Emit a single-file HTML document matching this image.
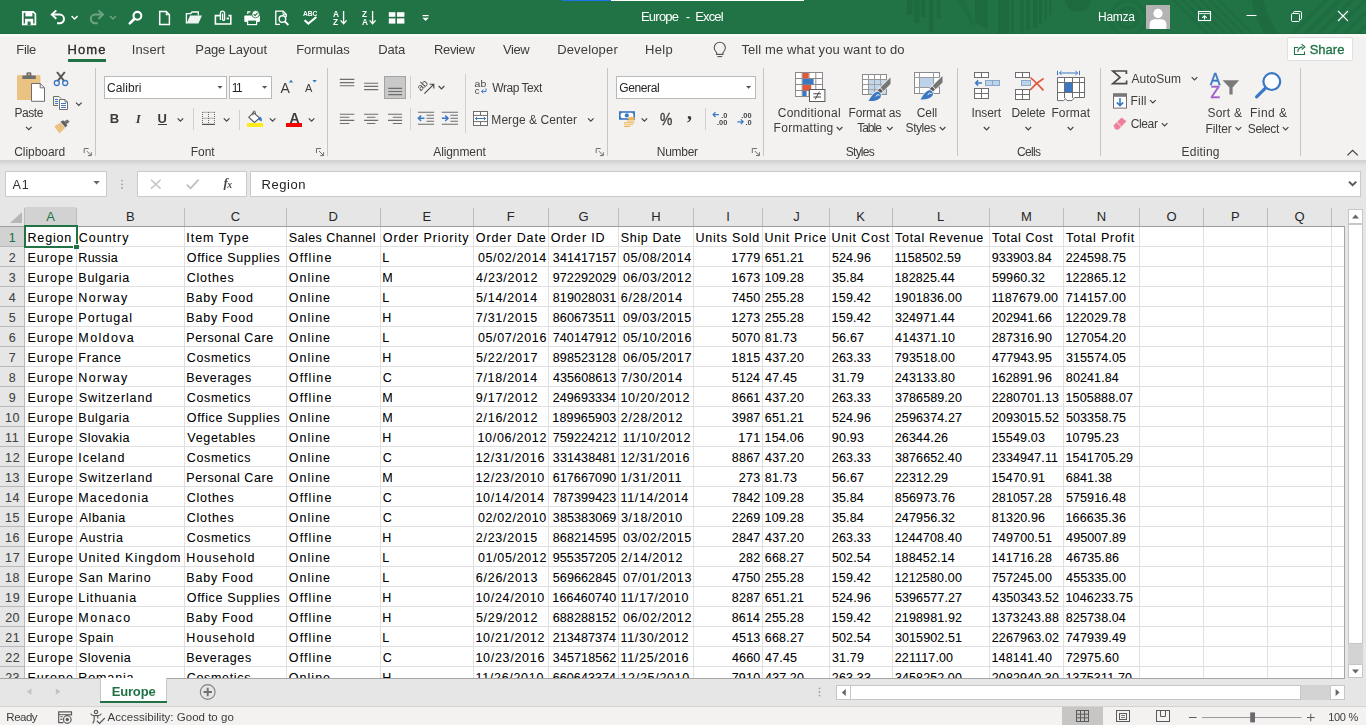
<!DOCTYPE html>
<html><head><meta charset="utf-8"><title>Europe - Excel</title>
<style>
html,body{margin:0;padding:0;}
body{width:1366px;height:725px;overflow:hidden;position:relative;background:#e6e6e6;font-family:"Liberation Sans",sans-serif;}
.r{position:absolute;}

.cells .t{text-shadow:0 0 .5px rgba(0,0,0,.2);}
.ga{position:absolute;left:0;top:0;width:1366px;height:725px;will-change:transform;}
.t{position:absolute;white-space:pre;color:#444;}
svg{position:absolute;overflow:visible;}
</style></head><body>
<div class="r" style="left:0px;top:0px;width:1366px;height:34px;background:#217346;"></div>
<div class="r" style="left:0px;top:34px;width:1366px;height:126px;background:#f3f2f1;"></div>
<div class="r" style="left:0px;top:34px;width:1366px;height:3px;background:#f8f8f6;"></div>
<div class="r" style="left:0px;top:33px;width:1366px;height:1px;background:#1f6e42;"></div>
<div class="r" style="left:0px;top:160px;width:1366px;height:47px;background:#e6e6e6;"></div>
<div class="r" style="left:0px;top:160px;width:1366px;height:6px;background:linear-gradient(#cfcfcf,#e6e6e6);"></div>
<div class="r" style="left:562px;top:0px;width:49px;height:1px;background:#1a73e8;"></div>
<div class="r" style="left:611px;top:0px;width:193px;height:1px;background:#ffffff;"></div>
<div class="ga">
<svg class="r" style="left:0px;top:0px;overflow:hidden" width="1366" height="34" viewBox="0 0 1366 34"><rect x="907" y="0" width="5.5" height="15" fill="#1e6a3f"/><rect x="914" y="0" width="5.5" height="23" fill="#1e6a3f"/><rect x="921" y="0" width="4.7" height="17.5" fill="#1e6a3f"/><rect x="929" y="0" width="4.6" height="31.6" fill="#1e6a3f"/><rect x="936.6" y="0" width="4.0" height="19" fill="#1e6a3f"/><path d="M975 0H987.6V30L975 22Z" fill="#1e6a3f"/><rect x="998" y="0" width="11" height="34" fill="#1e6a3f"/><rect x="1011" y="0" width="2.5" height="34" fill="#1e6a3f"/><rect x="1020.5" y="0" width="3.0" height="33" fill="#1e6a3f"/><rect x="1026" y="0" width="3.5" height="31" fill="#1e6a3f"/><rect x="1033" y="0" width="4.5" height="28" fill="#1e6a3f"/><rect x="1039" y="0" width="3.0" height="24" fill="#1e6a3f"/><rect x="1044.5" y="0" width="2.5" height="20" fill="#1e6a3f"/><rect x="1049" y="0" width="2.5" height="15" fill="#1e6a3f"/><path d="M957 0L965 0L975 26L972 26Z" fill="#1e6a3f" opacity=".6"/><circle cx="1078" cy="-2" r="13.5" fill="#1e6a3f"/><circle cx="1128" cy="18" r="10" fill="none" stroke="#1e6a3f" stroke-width="3.5" opacity=".7"/><circle cx="1128" cy="18" r="17.5" fill="none" stroke="#1e6a3f" stroke-width="3" opacity=".55"/><path d="M1172 0L1175.5 0L1209.5 34L1206 34Z" fill="#1e6a3f" opacity=".75"/><path d="M1181 0L1184.5 0L1218.5 34L1215 34Z" fill="#1e6a3f" opacity=".75"/><path d="M1190 0L1193.5 0L1227.5 34L1224 34Z" fill="#1e6a3f" opacity=".75"/><path d="M1199 0L1202.5 0L1236.5 34L1233 34Z" fill="#1e6a3f" opacity=".75"/><path d="M1208 0L1211.5 0L1245.5 34L1242 34Z" fill="#1e6a3f" opacity=".75"/><path d="M1217 0L1220.5 0L1254.5 34L1251 34Z" fill="#1e6a3f" opacity=".75"/><circle cx="1352" cy="-18" r="96" fill="none" stroke="#1e6a3f" stroke-width="12" opacity=".85"/><path d="M1290 34L1295 34L1329 0L1324 0Z" fill="#1e6a3f" opacity=".7"/><path d="M1303 34L1308 34L1342 0L1337 0Z" fill="#1e6a3f" opacity=".7"/><path d="M1316 34L1321 34L1355 0L1350 0Z" fill="#1e6a3f" opacity=".7"/><path d="M1329 34L1334 34L1368 0L1363 0Z" fill="#1e6a3f" opacity=".7"/><path d="M1342 34L1347 34L1381 0L1376 0Z" fill="#1e6a3f" opacity=".7"/><path d="M1355 34L1360 34L1394 0L1389 0Z" fill="#1e6a3f" opacity=".7"/><path d="M22.8 11.8H33.2L35.4 14V24.4H22.8Z" fill="none" stroke="#fff" stroke-width="1.7"/><rect x="25.4" y="11.8" width="7" height="4.6" fill="#fff"/><rect x="25" y="18.8" width="8.2" height="5.6" fill="#fff"/><rect x="27.6" y="21.6" width="3" height="3.4" fill="#217346"/><g opacity="1" transform="translate(50.5,0)"><path d="M1.2 14.6H9.2A4.3 4.3 0 0 1 9.2 23.2H6.5" fill="none" stroke="#fff" stroke-width="2"/><path d="M5.8 10.4L1.4 14.6L5.8 18.8" fill="none" stroke="#fff" stroke-width="2"/></g><path d="M71.60 16.00L74.60 19.00L77.60 16.00" fill="none" stroke="#fff" stroke-width="1.4"/><g opacity="0.35" transform="translate(104.3,0) scale(-1,1)"><path d="M1.2 14.6H9.2A4.3 4.3 0 0 1 9.2 23.2H6.5" fill="none" stroke="#fff" stroke-width="2"/><path d="M5.8 10.4L1.4 14.6L5.8 18.8" fill="none" stroke="#fff" stroke-width="2"/></g><g opacity=".35"><path d="M110.00 16.00L113.00 19.00L116.00 16.00" fill="none" stroke="#fff" stroke-width="1.4"/></g><circle cx="137.4" cy="15.8" r="3.9" fill="none" stroke="#fff" stroke-width="2.1"/><path d="M134.2 19L129.8 23.4" stroke="#fff" stroke-width="2.7" stroke-linecap="round"/><path d="M159.7 11.6H166.3L169.4 14.7V24.4H159.7Z" fill="none" stroke="#fff" stroke-width="1.5"/><path d="M166.3 11.6V14.7H169.4" fill="none" stroke="#fff" stroke-width="1.1"/><path d="M186.4 23.4V13.6H190.6L192 12H198.3V15.2" fill="none" stroke="#fff" stroke-width="1.3"/><path d="M186.6 23.6L190 15.6H202L198.4 23.6Z" fill="#fff" opacity=".92"/><path d="M220.6 15.6H215.4V24H230.8V15.6H228.4" fill="none" stroke="#fff" stroke-width="1.6"/><path d="M220.4 20V13.2A2.1 2.1 0 0 1 224.6 13.2V19.4A1 1 0 0 1 222.6 19.4V13.6" fill="none" stroke="#fff" stroke-width="1.3"/><rect x="226.6" y="17.6" width="2.4" height="1.8" fill="#fff"/><path d="M247.8 14V11.8H250.5" fill="none" stroke="#fff" stroke-width="1.2"/><rect x="244.3" y="15.4" width="15.6" height="6.6" rx="1" fill="#fff"/><rect x="247.6" y="20" width="9" height="4.6" fill="#217346" stroke="#fff" stroke-width="1.2"/><circle cx="255.6" cy="14.2" r="3.7" fill="#fff" stroke="#217346" stroke-width=".8"/><path d="M253.7 14.2L255.1 15.7L257.6 12.8" fill="none" stroke="#217346" stroke-width="1.1"/><path d="M286.2 17V14.2L283.2 11.2H275.8V24.4H280" fill="none" stroke="#fff" stroke-width="1.3"/><path d="M283 11.4V14.4H286" fill="none" stroke="#fff" stroke-width="1"/><circle cx="282.4" cy="19" r="3.3" fill="none" stroke="#fff" stroke-width="1.4"/><path d="M284.8 21.4L288.4 25" stroke="#fff" stroke-width="1.8"/><text x="303" y="15.6" font-family="Liberation Sans" font-weight="bold" font-size="6.6" fill="#fff" textLength="14.4" lengthAdjust="spacingAndGlyphs">ABC</text><path d="M304.6 20.2L308.3 23.6L316.4 17" fill="none" stroke="#fff" stroke-width="2"/><text x="333" y="16.8" font-family="Liberation Sans" font-weight="bold" font-size="8.2" fill="#fff">A</text><text x="333" y="24.6" font-family="Liberation Sans" font-weight="bold" font-size="8.2" fill="#fff">Z</text><path d="M343.6 11V23.6M340.6 20.4L343.6 23.8L346.6 20.4" fill="none" stroke="#fff" stroke-width="1.3"/><text x="362" y="16.8" font-family="Liberation Sans" font-weight="bold" font-size="8.2" fill="#fff">Z</text><text x="362" y="24.6" font-family="Liberation Sans" font-weight="bold" font-size="8.2" fill="#fff">A</text><path d="M372.6 11V23.6M369.6 20.4L372.6 23.8L375.6 20.4" fill="none" stroke="#fff" stroke-width="1.3"/><rect x="388.8" y="12.2" width="6.6" height="4.6" fill="#fff"/><rect x="397" y="12.2" width="7.4" height="4.6" fill="#fff"/><rect x="388.8" y="18.4" width="6.6" height="5.2" fill="#fff"/><rect x="397" y="18.4" width="7.4" height="5.2" fill="#fff"/><rect x="422.6" y="15" width="6" height="1.2" fill="#fff"/><path d="M422.4 17.8H428.8L425.6 21Z" fill="#fff"/><rect x="1146" y="5" width="24" height="24" fill="#b3b3b3"/><circle cx="1158" cy="13.4" r="4.6" fill="#fff"/><path d="M1149.6 29V24.6Q1149.6 19.6 1154.6 19.2H1161.4Q1166.4 19.6 1166.4 24.6V29Z" fill="#fff"/><rect x="1198.5" y="11.5" width="12" height="9" fill="none" stroke="#fff" stroke-width="1.1"/><path d="M1198.5 13.6H1210.5" stroke="#fff" stroke-width=".9"/><path d="M1204.5 19.6V16M1202.3 17.9L1204.5 15.7L1206.7 17.9" fill="none" stroke="#fff" stroke-width="1.1"/><path d="M1246.5 15.5H1256.5" stroke="#fff" stroke-width="1"/><rect x="1291.5" y="13.5" width="8" height="8" rx="1" fill="none" stroke="#fff" stroke-width="1"/><path d="M1293.5 13.5V12.6Q1293.5 11.5 1294.6 11.5H1300.4Q1301.5 11.5 1301.5 12.6V18.4Q1301.5 19.5 1300.4 19.5H1299.5" fill="none" stroke="#fff" stroke-width="1"/><path d="M1338 11L1348 21M1348 11L1338 21" stroke="#fff" stroke-width="1.1"/></svg>
<span class="t" style="left:640.93px;top:9.50px;font-size:13px;line-height:13px;letter-spacing:-0.755px;color:#fff;">Europe</span>
<span class="t" style="left:685.82px;top:9.50px;font-size:13px;line-height:13px;color:#fff;">-</span>
<span class="t" style="left:695.13px;top:9.50px;font-size:13px;line-height:13px;letter-spacing:-0.813px;color:#fff;">Excel</span>
<span class="t" style="left:1098.02px;top:11.34px;font-size:12px;line-height:12px;letter-spacing:-0.306px;color:#fff;">Hamza</span>
<span class="t" style="left:16.33px;top:43.00px;font-size:13px;line-height:13px;letter-spacing:-0.368px;color:#3c3c3c;">File</span>
<span class="t" style="left:131.80px;top:43.00px;font-size:13px;line-height:13px;letter-spacing:0.096px;color:#3c3c3c;">Insert</span>
<span class="t" style="left:195.33px;top:43.00px;font-size:13px;line-height:13px;letter-spacing:-0.124px;color:#3c3c3c;">Page Layout</span>
<span class="t" style="left:296.23px;top:43.00px;font-size:13px;line-height:13px;letter-spacing:-0.106px;color:#3c3c3c;">Formulas</span>
<span class="t" style="left:378.13px;top:43.00px;font-size:13px;line-height:13px;letter-spacing:-0.098px;color:#3c3c3c;">Data</span>
<span class="t" style="left:434.03px;top:43.00px;font-size:13px;line-height:13px;letter-spacing:-0.358px;color:#3c3c3c;">Review</span>
<span class="t" style="left:503.04px;top:43.00px;font-size:13px;line-height:13px;letter-spacing:-0.417px;color:#3c3c3c;">View</span>
<span class="t" style="left:557.13px;top:43.00px;font-size:13px;line-height:13px;letter-spacing:0.166px;color:#3c3c3c;">Developer</span>
<span class="t" style="left:644.93px;top:43.00px;font-size:13px;line-height:13px;letter-spacing:0.392px;color:#3c3c3c;">Help</span>
<span class="t" style="left:67.43px;top:43.00px;font-size:13px;line-height:13px;letter-spacing:1.122px;color:#2b2b2b;-webkit-text-stroke:0.35px #2b2b2b;">Home</span>
<div class="r" style="left:68px;top:59px;width:38px;height:3px;background:#217346;"></div>
<span class="t" style="left:741.41px;top:43.00px;font-size:13px;line-height:13px;letter-spacing:0.103px;color:#3c3c3c;">Tell me what you want to do</span>
<div class="r" style="left:1287px;top:37px;width:66px;height:24px;background:#ffffff;border-radius:2px;box-shadow:0 0 0 1px #e1dfdd inset;"></div>
<span class="t" style="left:1309.71px;top:42.70px;font-size:13px;line-height:13px;letter-spacing:-0.005px;color:#217346;-webkit-text-stroke:0.35px #217346;">Share</span>
<div class="r" style="left:95px;top:68px;width:1px;height:88px;background:#c8c6c4;"></div>
<div class="r" style="left:327px;top:68px;width:1px;height:88px;background:#c8c6c4;"></div>
<div class="r" style="left:607px;top:68px;width:1px;height:88px;background:#c8c6c4;"></div>
<div class="r" style="left:763px;top:68px;width:1px;height:88px;background:#c8c6c4;"></div>
<div class="r" style="left:957px;top:68px;width:1px;height:88px;background:#c8c6c4;"></div>
<div class="r" style="left:1100px;top:68px;width:1px;height:88px;background:#c8c6c4;"></div>
<div class="r" style="left:1300px;top:68px;width:1px;height:88px;background:#c8c6c4;"></div>
<div class="r" style="left:193px;top:108px;width:1px;height:22px;background:#d2d0ce;"></div>
<div class="r" style="left:239px;top:110px;width:1px;height:20px;background:#d2d0ce;"></div>
<div class="r" style="left:410px;top:76px;width:1px;height:23px;background:#d2d0ce;"></div>
<div class="r" style="left:410px;top:108px;width:1px;height:22px;background:#d2d0ce;"></div>
<div class="r" style="left:465px;top:74px;width:1px;height:59px;background:#d2d0ce;"></div>
<div class="r" style="left:705px;top:108px;width:1px;height:22px;background:#d2d0ce;"></div>
<span class="t" style="left:14.19px;top:145.84px;font-size:12px;line-height:12px;letter-spacing:-0.048px;color:#3c3c3c;">Clipboard</span>
<span class="t" style="left:190.82px;top:145.84px;font-size:12px;line-height:12px;letter-spacing:-0.080px;color:#3c3c3c;">Font</span>
<span class="t" style="left:433.28px;top:145.84px;font-size:12px;line-height:12px;letter-spacing:-0.106px;color:#3c3c3c;">Alignment</span>
<span class="t" style="left:656.82px;top:145.84px;font-size:12px;line-height:12px;letter-spacing:-0.279px;color:#3c3c3c;">Number</span>
<span class="t" style="left:845.86px;top:145.84px;font-size:12px;line-height:12px;letter-spacing:-0.780px;color:#3c3c3c;">Styles</span>
<span class="t" style="left:1016.89px;top:145.84px;font-size:12px;line-height:12px;letter-spacing:-0.657px;color:#3c3c3c;">Cells</span>
<span class="t" style="left:1181.62px;top:145.84px;font-size:12px;line-height:12px;letter-spacing:0.194px;color:#3c3c3c;">Editing</span>
<span class="t" style="left:14.52px;top:106.54px;font-size:12px;line-height:12px;letter-spacing:-0.442px;color:#3c3c3c;">Paste</span>
<div class="r" style="left:104px;top:76px;width:123px;height:23px;background:#fff;box-shadow:0 0 0 1px #b9b9b9 inset;"></div>
<span class="t" style="left:107.09px;top:81.84px;font-size:12px;line-height:12px;letter-spacing:0.068px;color:#262626;">Calibri</span>
<div class="r" style="left:229px;top:76px;width:43px;height:23px;background:#fff;box-shadow:0 0 0 1px #b9b9b9 inset;"></div>
<span class="t" style="left:231.79px;top:81.84px;font-size:12px;line-height:12px;letter-spacing:-1.448px;color:#262626;">11</span>
<div class="r" style="left:616px;top:76px;width:140px;height:23px;background:#fff;box-shadow:0 0 0 1px #b9b9b9 inset;"></div>
<span class="t" style="left:619.20px;top:81.84px;font-size:12px;line-height:12px;letter-spacing:-0.381px;color:#262626;">General</span>
<span class="t" style="left:109.63px;top:111.80px;font-size:13px;line-height:13px;color:#3c3c3c;font-weight:bold;">B</span>
<span class="t" style="left:135.63px;top:111.80px;font-size:13px;line-height:13px;color:#3c3c3c;font-weight:bold;font-style:italic;font-family:'Liberation Serif',serif;">I</span>
<span class="t" style="left:157.52px;top:111.80px;font-size:13px;line-height:13px;color:#3c3c3c;font-weight:bold;">U</span>
<div class="r" style="left:158px;top:124px;width:9px;height:1px;background:#3c3c3c;"></div>
<span class="t" style="left:280.47px;top:80.95px;font-size:14px;line-height:14px;color:#3c3c3c;">A</span>
<span class="t" style="left:304.98px;top:83.49px;font-size:11px;line-height:11px;color:#3c3c3c;">A</span>
<span class="t" style="left:289.45px;top:110.75px;font-size:14px;line-height:14px;color:#3c3c3c;font-weight:bold;">A</span>
<span class="t" style="left:492.25px;top:81.94px;font-size:12px;line-height:12px;letter-spacing:-0.450px;color:#3c3c3c;">Wrap Text</span>
<span class="t" style="left:491.32px;top:114.04px;font-size:12px;line-height:12px;letter-spacing:0.068px;color:#3c3c3c;">Merge &amp; Center</span>
<span class="t" style="left:660.32px;top:111.49px;font-size:16.2px;line-height:16.2px;color:#3c3c3c;transform:scaleX(.86);transform-origin:0 0;-webkit-text-stroke:.35px #3c3c3c;">%</span>
<span class="t" style="left:687.04px;top:102.27px;font-size:20px;line-height:20px;color:#3c3c3c;font-weight:bold;font-family:'Liberation Serif',serif;">,</span>
<span class="t" style="left:777.69px;top:106.54px;font-size:12px;line-height:12px;letter-spacing:0.287px;color:#3c3c3c;">Conditional</span>
<span class="t" style="left:773.62px;top:122.34px;font-size:12px;line-height:12px;letter-spacing:0.256px;color:#3c3c3c;">Formatting</span>
<span class="t" style="left:848.62px;top:106.54px;font-size:12px;line-height:12px;letter-spacing:-0.174px;color:#3c3c3c;">Format as</span>
<span class="t" style="left:857.13px;top:122.34px;font-size:12px;line-height:12px;letter-spacing:-0.979px;color:#3c3c3c;">Table</span>
<span class="t" style="left:916.79px;top:106.54px;font-size:12px;line-height:12px;letter-spacing:-0.087px;color:#3c3c3c;">Cell</span>
<span class="t" style="left:905.56px;top:122.34px;font-size:12px;line-height:12px;letter-spacing:-0.420px;color:#3c3c3c;">Styles</span>
<span class="t" style="left:971.39px;top:106.64px;font-size:12px;line-height:12px;letter-spacing:-0.063px;color:#3c3c3c;">Insert</span>
<span class="t" style="left:1011.62px;top:106.64px;font-size:12px;line-height:12px;letter-spacing:-0.154px;color:#3c3c3c;">Delete</span>
<span class="t" style="left:1051.42px;top:106.64px;font-size:12px;line-height:12px;letter-spacing:0.134px;color:#3c3c3c;">Format</span>
<span class="t" style="left:1131.38px;top:73.04px;font-size:12px;line-height:12px;letter-spacing:0.059px;color:#3c3c3c;">AutoSum</span>
<span class="t" style="left:1130.42px;top:95.34px;font-size:12px;line-height:12px;letter-spacing:0.253px;color:#3c3c3c;">Fill</span>
<span class="t" style="left:1130.79px;top:118.44px;font-size:12px;line-height:12px;letter-spacing:-0.392px;color:#3c3c3c;">Clear</span>
<span class="t" style="left:1207.46px;top:106.84px;font-size:12px;line-height:12px;letter-spacing:0.237px;color:#3c3c3c;">Sort &amp;</span>
<span class="t" style="left:1205.52px;top:122.54px;font-size:12px;line-height:12px;letter-spacing:-0.096px;color:#3c3c3c;">Filter</span>
<span class="t" style="left:1250.02px;top:106.84px;font-size:12px;line-height:12px;letter-spacing:0.478px;color:#3c3c3c;">Find &amp;</span>
<span class="t" style="left:1247.86px;top:122.54px;font-size:12px;line-height:12px;letter-spacing:-0.384px;color:#3c3c3c;">Select</span>
<svg class="r" style="left:0px;top:64px;overflow:visible" width="1366" height="96" viewBox="0 64 1366 96"><rect x="17" y="75.2" width="23.4" height="24.8" fill="#eac282"/><path d="M22.4 79V75.4H26.4V73.6Q26.4 72.2 27.8 72.2H30Q31.4 72.2 31.4 73.6V75.4H35.8V79Z" fill="#6f6f6f"/><circle cx="28.9" cy="74.3" r=".9" fill="#eac282"/><path d="M31.5 83.5H40.2L44.5 87.8V101.3H31.5Z" fill="#fff" stroke="#6e6e6e" stroke-width="1"/><path d="M40.2 83.5V87.8H44.5" fill="none" stroke="#6e6e6e" stroke-width="1"/><path d="M26.00 126.80L28.80 129.60L31.60 126.80" fill="none" stroke="#444" stroke-width="1.2"/><path d="M57 72L64.2 81.2M64.8 72L57.6 81.2" stroke="#555" stroke-width="2" fill="none"/><circle cx="56.8" cy="83" r="2.5" fill="none" stroke="#3b78c3" stroke-width="1.3"/><circle cx="65.2" cy="83" r="2.5" fill="none" stroke="#3b78c3" stroke-width="1.3"/><path d="M58 105.5H53.5V96.5H59L61 98.5" fill="none" stroke="#6e6e6e" stroke-width="1"/><rect x="55" y="99" width="3" height="1" fill="#3b78c3"/><rect x="55" y="101" width="3" height="1" fill="#3b78c3"/><rect x="55" y="103" width="3" height="1" fill="#3b78c3"/><path d="M59.5 99.5H65L67.5 102V109.5H59.5Z" fill="#fff" stroke="#6e6e6e" stroke-width="1"/><path d="M65 99.5V102H67.5" fill="none" stroke="#6e6e6e" stroke-width=".9"/><rect x="61" y="103" width="5" height="1" fill="#3b78c3"/><rect x="61" y="105" width="5" height="1" fill="#3b78c3"/><rect x="61" y="107" width="5" height="1" fill="#3b78c3"/><path d="M76.00 102.60L78.80 105.40L81.60 102.60" fill="none" stroke="#444" stroke-width="1.2"/><path d="M54.2 126.4L60.4 122.4L65 128L59.4 133.4Z" fill="#eac282"/><path d="M60.6 121.8L63.2 120.2L67.4 125.2L65.4 127.6Z" fill="#5f5f5f"/><path d="M63.8 121.6L67.6 119.4L69.6 121.8L66.2 124.6Z" fill="#737373"/><path d="M84.2 153V148.5H88.7" fill="none" stroke="#6e6e6e" stroke-width="1"/><path d="M86.7 151L91.10000000000001 155.4M87.9 155.6H91.3V152.2" fill="none" stroke="#6e6e6e" stroke-width="1"/><path d="M217.4 86H222.6L220 88.8Z" fill="#555"/><path d="M262 86H267.2L264.6 88.8Z" fill="#555"/><path d="M288.8 82.4L291 79.8L293.2 82.4Z" fill="#3b78c3"/><path d="M312.4 80L316.8 80L314.6 82.6Z" fill="#3b78c3"/><path d="M177.60 118.40L180.40 121.20L183.20 118.40" fill="none" stroke="#444" stroke-width="1.2"/><path d="M202.5 112.3H215M202.5 118.3H215M202.5 112V124M208.5 112V124M214.5 112V124" stroke="#6a6a6a" stroke-width="1" stroke-dasharray="1 1" fill="none"/><path d="M202 124.4H215" stroke="#555" stroke-width="1.2"/><path d="M223.80 118.40L226.60 121.20L229.40 118.40" fill="none" stroke="#444" stroke-width="1.2"/><path d="M253.6 112.6L259.6 118L254.4 122.4L248.8 117.2Z" fill="#fff" stroke="#5a5a5a" stroke-width="1.1"/><path d="M253 115.4V112.4Q253 111 254.2 111Q255.4 111 255.4 112.4V114" fill="none" stroke="#5a5a5a" stroke-width="1"/><path d="M259.8 116.6Q262.4 117.6 261.8 121.4Q259.4 120.6 258 119.4Z" fill="#3b78c3"/><rect x="247" y="123" width="16.2" height="4" fill="#ffeb1c"/><path d="M269.80 118.40L272.60 121.20L275.40 118.40" fill="none" stroke="#444" stroke-width="1.2"/><rect x="286" y="123" width="16" height="4" fill="#f00505"/><path d="M308.80 118.40L311.60 121.20L314.40 118.40" fill="none" stroke="#444" stroke-width="1.2"/><path d="M316.5 153V148.5H321" fill="none" stroke="#6e6e6e" stroke-width="1"/><path d="M319 151L323.4 155.4M320.2 155.6H323.6V152.2" fill="none" stroke="#6e6e6e" stroke-width="1"/><path d="M339.8 79.4H354.3M339.8 82.6H354.3M339.8 85.8H354.3" stroke="#6e6e6e" stroke-width="1.1" fill="none"/><path d="M364.1 83.2H378.2M364.1 86.4H378.2M364.1 89.6H378.2" stroke="#6e6e6e" stroke-width="1.1" fill="none"/><rect x="384.5" y="76.5" width="21" height="22" fill="#c9c9c9" stroke="#a3a3a3" stroke-width="1"/><path d="M388.3 88.4H402.1M388.3 91.5H402.1M388.3 94.6H402.1" stroke="#6e6e6e" stroke-width="1.1" fill="none"/><path d="M339.8 114.2H354.3M339.8 117.3H349.4M339.8 120.4H354.3M339.8 123.5H349.4" stroke="#6e6e6e" stroke-width="1.1" fill="none"/><path d="M364.1 114.2H378.2M366.9 117.3H375.4M364.1 120.4H378.2M366.9 123.5H375.4" stroke="#6e6e6e" stroke-width="1.1" fill="none"/><path d="M388.0 114.2H402.1M392.8 117.3H402.1M388.0 120.4H402.1M392.8 123.5H402.1" stroke="#6e6e6e" stroke-width="1.1" fill="none"/><text transform="translate(420.7,91.6) rotate(-45)" font-family="Liberation Sans" font-size="10" fill="#444">ab</text><path d="M424.4 93.6L433.4 84.6M429.6 84.2H433.8V88.4" fill="none" stroke="#444" stroke-width="1.1"/><path d="M438.70 86.00L441.50 88.80L444.30 86.00" fill="none" stroke="#444" stroke-width="1.2"/><path d="M417.9 112.3H434.1M417.9 124.3H434.1" stroke="#6e6e6e" stroke-width="1.1" fill="none"/><path d="M426.5 115.3H434.1M426.5 118.3H434.1M426.5 121.3H434.1" stroke="#6e6e6e" stroke-width="1.1" fill="none"/><path d="M418.29999999999995 118.3H424.5M421.09999999999997 115.6L418.29999999999995 118.3L421.09999999999997 121" fill="none" stroke="#3b78c3" stroke-width="1.5"/><path d="M441.8 112.3H458.0M441.8 124.3H458.0" stroke="#6e6e6e" stroke-width="1.1" fill="none"/><path d="M450.4 115.3H458.0M450.4 118.3H458.0M450.4 121.3H458.0" stroke="#6e6e6e" stroke-width="1.1" fill="none"/><path d="M441.8 118.3H447.8M445.2 115.6L448.0 118.3L445.2 121" fill="none" stroke="#3b78c3" stroke-width="1.5"/><text x="474.6" y="87" font-family="Liberation Sans" font-size="9.6" fill="#444" textLength="11.6" lengthAdjust="spacingAndGlyphs">ab</text><text x="474.8" y="94" font-family="Liberation Sans" font-size="9.6" fill="#444">c</text><path d="M486 88.4V91.4H481.6M483.4 89.6L481.4 91.4L483.4 93.2" fill="none" stroke="#3b78c3" stroke-width="1"/><rect x="473.5" y="111.5" width="14" height="14" fill="#fff" stroke="#6e6e6e" stroke-width="1"/><path d="M473.5 115.4H487.5M473.5 121.6H487.5M480.5 111.5V115.4M480.5 121.6V125.5" stroke="#6e6e6e" stroke-width="1" fill="none"/><path d="M475.4 118.5H485.6M477.2 116.8L475.4 118.5L477.2 120.2M483.8 116.8L485.6 118.5L483.8 120.2" fill="none" stroke="#3b78c3" stroke-width="1"/><path d="M588.00 118.40L590.80 121.20L593.60 118.40" fill="none" stroke="#444" stroke-width="1.2"/><path d="M596.2 153V148.5H600.7" fill="none" stroke="#6e6e6e" stroke-width="1"/><path d="M598.7 151L603.1 155.4M599.9000000000001 155.6H603.3000000000001V152.2" fill="none" stroke="#6e6e6e" stroke-width="1"/><path d="M746 86H751.2L748.6 88.8Z" fill="#555"/><rect x="619.8" y="112" width="14.4" height="7" fill="#fff" stroke="#3b78c3" stroke-width="1.6"/><circle cx="626.8" cy="115.4" r="2.1" fill="#3b78c3"/><path d="M620 112.2H622.6L620 114.6ZM634 112.2H631.4L634 114.6ZM620 118.8H622.6L620 116.4Z" fill="#3b78c3"/><ellipse cx="631.4" cy="118.4" rx="3.4" ry="1.7" fill="#eeb65a"/><rect x="624" y="122.2" width="10" height="1.2" fill="#eeb65a"/><rect x="624" y="124.2" width="9" height="1.2" fill="#f2c47a"/><rect x="624" y="126" width="6" height="1" fill="#eeb65a"/><rect x="627" y="120.4" width="7.6" height="1.2" fill="#f2c47a"/><path d="M641.60 118.40L644.40 121.20L647.20 118.40" fill="none" stroke="#444" stroke-width="1.2"/><path d="M713.1 114.6H718.9000000000001M715.5 112.2L713.1 114.6L715.5 117" fill="none" stroke="#3b78c3" stroke-width="1.2"/><text x="727.3000000000001" y="117.6" font-family="Liberation Sans" font-weight="bold" font-size="7.4" fill="#444" text-anchor="end">.0</text><text x="727.3000000000001" y="124.8" font-family="Liberation Sans" font-weight="bold" font-size="7.4" fill="#444" text-anchor="end">.00</text><text x="751.6" y="117.6" font-family="Liberation Sans" font-weight="bold" font-size="7.4" fill="#444" text-anchor="end">.00</text><path d="M737.4 121.8H743.2M740.8 119.4L743.2 121.8L740.8 124.2" fill="none" stroke="#3b78c3" stroke-width="1.2"/><text x="751.6" y="124.8" font-family="Liberation Sans" font-weight="bold" font-size="7.4" fill="#444" text-anchor="end">.0</text><path d="M752.3 153V148.5H756.8" fill="none" stroke="#6e6e6e" stroke-width="1"/><path d="M754.8 151L759.1999999999999 155.4M756.0 155.6H759.4V152.2" fill="none" stroke="#6e6e6e" stroke-width="1"/><rect x="795.5" y="72.5" width="27.0" height="24.0" fill="#fff" stroke="#8a8a8a" stroke-width="1"/><path d="M802.2 72.5V96.5M809.0 72.5V96.5M815.8 72.5V96.5M795.5 78.5H822.5M795.5 84.5H822.5M795.5 90.5H822.5" stroke="#8a8a8a" stroke-width="1" fill="none"/><rect x="802.6" y="73" width="6" height="5.2" fill="#e0573a"/><rect x="802.6" y="79" width="11" height="5.4" fill="#3b78c3"/><rect x="802.6" y="85" width="8.6" height="5.4" fill="#e0573a"/><rect x="802.6" y="91" width="4" height="5" fill="#3b78c3"/><rect x="809.5" y="89.5" width="15.4" height="12" fill="#fff" stroke="#5a5a5a" stroke-width="1"/><path d="M813.4 93.8H821M813.4 97H821M819.4 91.6L815.2 99.4" stroke="#444" stroke-width="1" fill="none"/><path d="M836.80 127.00L839.60 129.80L842.40 127.00" fill="none" stroke="#444" stroke-width="1.2"/><rect x="862.5" y="74.5" width="24.0" height="20.0" fill="#fff" stroke="#8a8a8a" stroke-width="1"/><path d="M868.5 74.5V94.5M874.5 74.5V94.5M880.5 74.5V94.5M862.5 79.5H886.5M862.5 84.5H886.5M862.5 89.5H886.5" stroke="#8a8a8a" stroke-width="1" fill="none"/><rect x="869" y="80" width="17" height="14" fill="#bdd3ea" opacity=".9"/><path d="M868.5 74.5V94.5M874.5 74.5V94.5M880.5 74.5V94.5M862.5 79.5H886.5M862.5 84.5H886.5M862.5 89.5H886.5" stroke="#9a9a9a" stroke-width=".8" fill="none"/><path d="M880.0 88L890.5 77.5L890.5 84L883.0 91.4Z" fill="#767676" stroke="#f3f2f1" stroke-width="1.6" paint-order="stroke"/><path d="M877.5 90.6L880.1 88.2L882.9 91.2L880.5 93.6Z" fill="#5a5a5a" stroke="#f3f2f1" stroke-width="1.6" paint-order="stroke"/><path d="M868.5 101Q873.5 92 878.1 91.6Q881.9 93.6 880.5 97.4Q877.5 101.4 868.5 101Z" fill="#3b78c3" stroke="#f3f2f1" stroke-width="1.6" paint-order="stroke"/><path d="M875.7 96.4Q877.9 93.6 879.5 95.2" fill="none" stroke="#fff" stroke-width="1"/><path d="M887.00 127.00L889.80 129.80L892.60 127.00" fill="none" stroke="#444" stroke-width="1.2"/><rect x="914.5" y="72.5" width="25" height="21" fill="#fff" stroke="#8a8a8a" stroke-width="1"/><rect x="919.5" y="77.5" width="14" height="10" fill="#bdd3ea"/><path d="M919.5 72.5V93.5M933.5 72.5V93.5M914.5 77.5H939.5M914.5 87.5H939.5" stroke="#9a9a9a" stroke-width="1" fill="none"/><path d="M932.0 86.4L942.5 75.9L942.5 82.4L935.0 89.80000000000001Z" fill="#767676" stroke="#f3f2f1" stroke-width="1.6" paint-order="stroke"/><path d="M929.5 89.0L932.1 86.60000000000001L934.9 89.60000000000001L932.5 92.0Z" fill="#5a5a5a" stroke="#f3f2f1" stroke-width="1.6" paint-order="stroke"/><path d="M920.5 99.4Q925.5 90.4 930.1 90.0Q933.9 92.0 932.5 95.80000000000001Q929.5 99.80000000000001 920.5 99.4Z" fill="#3b78c3" stroke="#f3f2f1" stroke-width="1.6" paint-order="stroke"/><path d="M927.7 94.80000000000001Q929.9 92.0 931.5 93.60000000000001" fill="none" stroke="#fff" stroke-width="1"/><path d="M939.80 127.00L942.60 129.80L945.40 127.00" fill="none" stroke="#444" stroke-width="1.2"/><rect x="974.5" y="72.5" width="14.0" height="5.0" fill="#fff" stroke="#6e6e6e" stroke-width="1"/><path d="M981.5 72.5V77.5" stroke="#6e6e6e" stroke-width="1" fill="none"/><rect x="985.5" y="80.5" width="14" height="5" fill="#bdd3ea" stroke="#8aa8cc" stroke-width="1"/><path d="M992.5 80.5V85.5" stroke="#8aa8cc" stroke-width="1"/><path d="M975.6 83H982M978.2 80.4L975.6 83L978.2 85.6" fill="none" stroke="#3b78c3" stroke-width="1.5"/><rect x="974.5" y="88.5" width="14.0" height="10.0" fill="#fff" stroke="#6e6e6e" stroke-width="1"/><path d="M981.5 88.5V98.5M974.5 93.5H988.5" stroke="#6e6e6e" stroke-width="1" fill="none"/><path d="M983.80 127.00L986.60 129.80L989.40 127.00" fill="none" stroke="#444" stroke-width="1.2"/><rect x="1015.5" y="72.5" width="14.0" height="5.0" fill="#fff" stroke="#6e6e6e" stroke-width="1"/><path d="M1022.5 72.5V77.5" stroke="#6e6e6e" stroke-width="1" fill="none"/><rect x="1021.5" y="80.5" width="9" height="5" fill="#bdd3ea" stroke="#8aa8cc" stroke-width="1"/><rect x="1015.5" y="89.5" width="14.0" height="10.0" fill="#fff" stroke="#6e6e6e" stroke-width="1"/><path d="M1022.5 89.5V99.5M1015.5 94.5H1029.5" stroke="#6e6e6e" stroke-width="1" fill="none"/><path d="M1030.4 77.6Q1036 82 1043.4 90.4M1043.6 78.6Q1036 83 1030.2 90" fill="none" stroke="#e0573a" stroke-width="1.7"/><path d="M1025.50 127.00L1028.30 129.80L1031.10 127.00" fill="none" stroke="#444" stroke-width="1.2"/><path d="M1057.5 70.8V75.2M1079.5 70.8V75.2M1059.4 73H1077.6M1061.6 71L1059.4 73L1061.6 75M1075.4 71L1077.6 73L1075.4 75" fill="none" stroke="#3b78c3" stroke-width="1"/><path d="M1057.5 77.5H1084.5V97.5H1074.5L1072 100.6H1067L1065.4 98.6L1063.6 100.6H1057.5Z" fill="#fff" stroke="#6e6e6e" stroke-width="1"/><path d="M1064.5 77.5V98M1072.5 77.5V98M1079.5 77.5V97.5M1057.5 82.5H1084.5M1057.5 92.5H1084.5" stroke="#6e6e6e" stroke-width="1" fill="none"/><rect x="1065" y="83" width="7" height="9" fill="#3b78c3"/><path d="M1067.70 127.00L1070.50 129.80L1073.30 127.00" fill="none" stroke="#444" stroke-width="1.2"/><path d="M1126.4 74V71H1112.8L1120 77.4L1112.8 83.6H1126.6V80.4" fill="none" stroke="#4a4a4a" stroke-width="1.7"/><path d="M1191.70 77.20L1194.50 80.00L1197.30 77.20" fill="none" stroke="#444" stroke-width="1.2"/><rect x="1113.5" y="94.5" width="13" height="13.6" fill="#fff" stroke="#6e6e6e" stroke-width="1"/><rect x="1113" y="93.2" width="14" height="3.6" fill="#777"/><path d="M1120 98V105.4M1116.8 102.4L1120 105.6L1123.2 102.4" fill="none" stroke="#3b78c3" stroke-width="1.6"/><path d="M1150.10 100.20L1152.90 103.00L1155.70 100.20" fill="none" stroke="#444" stroke-width="1.2"/><path d="M1113.4 125.4L1121.6 117.4L1126.4 121.2L1118.6 129.6L1115.4 129.6Z" fill="#ee7f9a"/><path d="M1116.8 122.2L1121.4 126.6" stroke="#f8c4d0" stroke-width="1.2"/><path d="M1161.80 123.20L1164.60 126.00L1167.40 123.20" fill="none" stroke="#444" stroke-width="1.2"/><text x="1210.1" y="84.6" font-family="Liberation Sans" font-size="15.6" fill="#3b78c3" stroke="#3b78c3" stroke-width=".5">A</text><text x="1210.6" y="98" font-family="Liberation Sans" font-size="15.6" fill="#a35fcc" stroke="#a35fcc" stroke-width=".5">Z</text><path d="M1222.6 80.2H1239.2L1232.6 87.4V94.6H1229.4V87.4Z" fill="#7a7a7a"/><path d="M1235.60 127.20L1238.40 130.00L1241.20 127.20" fill="none" stroke="#444" stroke-width="1.2"/><circle cx="1271.8" cy="81.6" r="8.4" fill="#fff" stroke="#3b78c3" stroke-width="2.2"/><path d="M1265.4 88.2L1256.6 96.8" stroke="#3b78c3" stroke-width="3.2" stroke-linecap="round"/><path d="M1282.80 127.20L1285.60 130.00L1288.40 127.20" fill="none" stroke="#444" stroke-width="1.2"/><path d="M1347.4 155.4L1352.6 150.4L1357.8 155.4" fill="none" stroke="#444" stroke-width="1.3"/></svg>
<svg class="r" style="left:700px;top:36px;overflow:visible" width="660" height="28" viewBox="700 36 660 28"><path d="M716.6 52.6Q714.2 50.4 714.2 47.8A5.6 5.6 0 0 1 725.4 47.8Q725.4 50.4 723 52.6V54.4H716.6Z" fill="none" stroke="#555" stroke-width="1.1"/><path d="M717.4 56.6H722.2" stroke="#555" stroke-width="1.1"/><path d="M1298.2 47.5H1294.5V54.5H1304.5V51.4" fill="none" stroke="#217346" stroke-width="1.1"/><path d="M1297.7 51.8Q1298.4 47.3 1302.6 46.9" fill="none" stroke="#217346" stroke-width="1.2"/><path d="M1301.7 44.3L1304.9 46.9L1301.7 49.5" fill="none" stroke="#217346" stroke-width="1.1"/></svg>
<div class="r" style="left:5px;top:171px;width:102px;height:26px;background:#fff;box-shadow:0 0 0 1px #cacaca inset;"></div>
<span class="t" style="left:12.38px;top:179.12px;font-size:12.5px;line-height:12.5px;letter-spacing:1.045px;color:#333;">A1</span>
<div class="r" style="left:137px;top:171px;width:110px;height:26px;background:#fff;box-shadow:0 0 0 1px #cacaca inset;"></div>
<div class="r" style="left:250px;top:171px;width:1111px;height:26px;background:#fff;box-shadow:0 0 0 1px #cacaca inset;"></div>
<span class="t" style="left:261.53px;top:177.60px;font-size:13px;line-height:13px;letter-spacing:0.547px;color:#222;">Region</span>
<svg class="r" style="left:0px;top:166px;overflow:visible" width="1366" height="40" viewBox="0 166 1366 40"><path d="M93.4 181H99.8L96.6 184.6Z" fill="#666"/><circle cx="122" cy="180.6" r=".9" fill="#a0a0a0"/><circle cx="122" cy="184.3" r=".9" fill="#a0a0a0"/><circle cx="122" cy="188" r=".9" fill="#a0a0a0"/><path d="M151 179.8L160.6 188.8M160.6 179.8L151 188.8" stroke="#c2c2c2" stroke-width="1.5" fill="none"/><path d="M186.8 184.6L190.6 188.4L198.6 179.6" stroke="#c2c2c2" stroke-width="2" fill="none"/><text x="223.4" y="187.4" font-family="Liberation Serif" font-style="italic" font-weight="bold" font-size="13" fill="#4a4a4a">f</text><text x="227.2" y="188.2" font-family="Liberation Serif" font-style="italic" font-weight="bold" font-size="9.6" fill="#4a4a4a">x</text><path d="M1348.9 181.6L1352.6 185.2L1356.3 181.6" fill="none" stroke="#555" stroke-width="1.9"/></svg>
</div>
<div class="r" style="left:0px;top:207px;width:1345px;height:20px;background:#e6e6e6;"></div>
<div class="r" style="left:0px;top:227px;width:1345px;height:451px;background:#fff;"></div>
<div class="r" style="left:0px;top:227px;width:24px;height:451px;background:#e6e6e6;"></div>
<div class="r" style="left:25px;top:207px;width:51px;height:19px;background:#d2d2d2;"></div>
<div class="r" style="left:0px;top:227px;width:24px;height:19px;background:#d2d2d2;"></div>
<div class="r" style="left:25px;top:246px;width:1320px;height:1px;background:#e0e0e0;"></div>
<div class="r" style="left:0px;top:246px;width:24px;height:1px;background:#b8b8b8;"></div>
<div class="r" style="left:25px;top:266px;width:1320px;height:1px;background:#e0e0e0;"></div>
<div class="r" style="left:0px;top:266px;width:24px;height:1px;background:#b8b8b8;"></div>
<div class="r" style="left:25px;top:286px;width:1320px;height:1px;background:#e0e0e0;"></div>
<div class="r" style="left:0px;top:286px;width:24px;height:1px;background:#b8b8b8;"></div>
<div class="r" style="left:25px;top:306px;width:1320px;height:1px;background:#e0e0e0;"></div>
<div class="r" style="left:0px;top:306px;width:24px;height:1px;background:#b8b8b8;"></div>
<div class="r" style="left:25px;top:326px;width:1320px;height:1px;background:#e0e0e0;"></div>
<div class="r" style="left:0px;top:326px;width:24px;height:1px;background:#b8b8b8;"></div>
<div class="r" style="left:25px;top:346px;width:1320px;height:1px;background:#e0e0e0;"></div>
<div class="r" style="left:0px;top:346px;width:24px;height:1px;background:#b8b8b8;"></div>
<div class="r" style="left:25px;top:366px;width:1320px;height:1px;background:#e0e0e0;"></div>
<div class="r" style="left:0px;top:366px;width:24px;height:1px;background:#b8b8b8;"></div>
<div class="r" style="left:25px;top:386px;width:1320px;height:1px;background:#e0e0e0;"></div>
<div class="r" style="left:0px;top:386px;width:24px;height:1px;background:#b8b8b8;"></div>
<div class="r" style="left:25px;top:406px;width:1320px;height:1px;background:#e0e0e0;"></div>
<div class="r" style="left:0px;top:406px;width:24px;height:1px;background:#b8b8b8;"></div>
<div class="r" style="left:25px;top:426px;width:1320px;height:1px;background:#e0e0e0;"></div>
<div class="r" style="left:0px;top:426px;width:24px;height:1px;background:#b8b8b8;"></div>
<div class="r" style="left:25px;top:446px;width:1320px;height:1px;background:#e0e0e0;"></div>
<div class="r" style="left:0px;top:446px;width:24px;height:1px;background:#b8b8b8;"></div>
<div class="r" style="left:25px;top:466px;width:1320px;height:1px;background:#e0e0e0;"></div>
<div class="r" style="left:0px;top:466px;width:24px;height:1px;background:#b8b8b8;"></div>
<div class="r" style="left:25px;top:486px;width:1320px;height:1px;background:#e0e0e0;"></div>
<div class="r" style="left:0px;top:486px;width:24px;height:1px;background:#b8b8b8;"></div>
<div class="r" style="left:25px;top:506px;width:1320px;height:1px;background:#e0e0e0;"></div>
<div class="r" style="left:0px;top:506px;width:24px;height:1px;background:#b8b8b8;"></div>
<div class="r" style="left:25px;top:526px;width:1320px;height:1px;background:#e0e0e0;"></div>
<div class="r" style="left:0px;top:526px;width:24px;height:1px;background:#b8b8b8;"></div>
<div class="r" style="left:25px;top:546px;width:1320px;height:1px;background:#e0e0e0;"></div>
<div class="r" style="left:0px;top:546px;width:24px;height:1px;background:#b8b8b8;"></div>
<div class="r" style="left:25px;top:566px;width:1320px;height:1px;background:#e0e0e0;"></div>
<div class="r" style="left:0px;top:566px;width:24px;height:1px;background:#b8b8b8;"></div>
<div class="r" style="left:25px;top:586px;width:1320px;height:1px;background:#e0e0e0;"></div>
<div class="r" style="left:0px;top:586px;width:24px;height:1px;background:#b8b8b8;"></div>
<div class="r" style="left:25px;top:606px;width:1320px;height:1px;background:#e0e0e0;"></div>
<div class="r" style="left:0px;top:606px;width:24px;height:1px;background:#b8b8b8;"></div>
<div class="r" style="left:25px;top:626px;width:1320px;height:1px;background:#e0e0e0;"></div>
<div class="r" style="left:0px;top:626px;width:24px;height:1px;background:#b8b8b8;"></div>
<div class="r" style="left:25px;top:646px;width:1320px;height:1px;background:#e0e0e0;"></div>
<div class="r" style="left:0px;top:646px;width:24px;height:1px;background:#b8b8b8;"></div>
<div class="r" style="left:25px;top:666px;width:1320px;height:1px;background:#e0e0e0;"></div>
<div class="r" style="left:0px;top:666px;width:24px;height:1px;background:#b8b8b8;"></div>
<div class="r" style="left:76px;top:227px;width:1px;height:451px;background:#e0e0e0;"></div>
<div class="r" style="left:76px;top:208px;width:1px;height:18px;background:#bdbdbd;"></div>
<div class="r" style="left:184px;top:227px;width:1px;height:451px;background:#e0e0e0;"></div>
<div class="r" style="left:184px;top:208px;width:1px;height:18px;background:#bdbdbd;"></div>
<div class="r" style="left:286px;top:227px;width:1px;height:451px;background:#e0e0e0;"></div>
<div class="r" style="left:286px;top:208px;width:1px;height:18px;background:#bdbdbd;"></div>
<div class="r" style="left:380px;top:227px;width:1px;height:451px;background:#e0e0e0;"></div>
<div class="r" style="left:380px;top:208px;width:1px;height:18px;background:#bdbdbd;"></div>
<div class="r" style="left:473px;top:227px;width:1px;height:451px;background:#e0e0e0;"></div>
<div class="r" style="left:473px;top:208px;width:1px;height:18px;background:#bdbdbd;"></div>
<div class="r" style="left:548px;top:227px;width:1px;height:451px;background:#e0e0e0;"></div>
<div class="r" style="left:548px;top:208px;width:1px;height:18px;background:#bdbdbd;"></div>
<div class="r" style="left:618px;top:227px;width:1px;height:451px;background:#e0e0e0;"></div>
<div class="r" style="left:618px;top:208px;width:1px;height:18px;background:#bdbdbd;"></div>
<div class="r" style="left:693px;top:227px;width:1px;height:451px;background:#e0e0e0;"></div>
<div class="r" style="left:693px;top:208px;width:1px;height:18px;background:#bdbdbd;"></div>
<div class="r" style="left:762px;top:227px;width:1px;height:451px;background:#e0e0e0;"></div>
<div class="r" style="left:762px;top:208px;width:1px;height:18px;background:#bdbdbd;"></div>
<div class="r" style="left:829px;top:227px;width:1px;height:451px;background:#e0e0e0;"></div>
<div class="r" style="left:829px;top:208px;width:1px;height:18px;background:#bdbdbd;"></div>
<div class="r" style="left:892px;top:227px;width:1px;height:451px;background:#e0e0e0;"></div>
<div class="r" style="left:892px;top:208px;width:1px;height:18px;background:#bdbdbd;"></div>
<div class="r" style="left:989px;top:227px;width:1px;height:451px;background:#e0e0e0;"></div>
<div class="r" style="left:989px;top:208px;width:1px;height:18px;background:#bdbdbd;"></div>
<div class="r" style="left:1063px;top:227px;width:1px;height:451px;background:#e0e0e0;"></div>
<div class="r" style="left:1063px;top:208px;width:1px;height:18px;background:#bdbdbd;"></div>
<div class="r" style="left:1139px;top:227px;width:1px;height:451px;background:#e0e0e0;"></div>
<div class="r" style="left:1139px;top:208px;width:1px;height:18px;background:#bdbdbd;"></div>
<div class="r" style="left:1203px;top:227px;width:1px;height:451px;background:#e0e0e0;"></div>
<div class="r" style="left:1203px;top:208px;width:1px;height:18px;background:#bdbdbd;"></div>
<div class="r" style="left:1267px;top:227px;width:1px;height:451px;background:#e0e0e0;"></div>
<div class="r" style="left:1267px;top:208px;width:1px;height:18px;background:#bdbdbd;"></div>
<div class="r" style="left:1331px;top:227px;width:1px;height:451px;background:#e0e0e0;"></div>
<div class="r" style="left:1331px;top:208px;width:1px;height:18px;background:#bdbdbd;"></div>
<div class="r" style="left:24px;top:208px;width:1px;height:18px;background:#bdbdbd;"></div>
<div class="r" style="left:24px;top:227px;width:1px;height:451px;background:#b8b8b8;"></div>
<div class="r" style="left:0px;top:226px;width:1345px;height:1px;background:#9d9d9d;"></div>
<div class="r" style="left:25px;top:226px;width:52px;height:1px;background:#217346;"></div>
<div class="r" style="left:1344px;top:227px;width:1px;height:452px;background:#a6a6a6;"></div>
<svg class="r" style="left:10px;top:212px" width="12" height="11"><path d="M12 0V11H0Z" fill="#b7b7b7"/></svg>
<span class="t" style="left:46.16px;top:210.20px;font-size:13px;line-height:13px;color:#217346;">A</span>
<span class="t" style="left:125.97px;top:210.20px;font-size:13px;line-height:13px;color:#262626;">B</span>
<span class="t" style="left:230.72px;top:210.20px;font-size:13px;line-height:13px;color:#262626;">C</span>
<span class="t" style="left:328.58px;top:210.20px;font-size:13px;line-height:13px;color:#262626;">D</span>
<span class="t" style="left:422.41px;top:210.20px;font-size:13px;line-height:13px;color:#262626;">E</span>
<span class="t" style="left:506.76px;top:210.20px;font-size:13px;line-height:13px;color:#262626;">F</span>
<span class="t" style="left:578.60px;top:210.20px;font-size:13px;line-height:13px;color:#262626;">G</span>
<span class="t" style="left:651.30px;top:210.20px;font-size:13px;line-height:13px;color:#262626;">H</span>
<span class="t" style="left:726.19px;top:210.20px;font-size:13px;line-height:13px;color:#262626;">I</span>
<span class="t" style="left:793.13px;top:210.20px;font-size:13px;line-height:13px;color:#262626;">J</span>
<span class="t" style="left:856.20px;top:210.20px;font-size:13px;line-height:13px;color:#262626;">K</span>
<span class="t" style="left:937.07px;top:210.20px;font-size:13px;line-height:13px;color:#262626;">L</span>
<span class="t" style="left:1021.09px;top:210.20px;font-size:13px;line-height:13px;color:#262626;">M</span>
<span class="t" style="left:1096.80px;top:210.20px;font-size:13px;line-height:13px;color:#262626;">N</span>
<span class="t" style="left:1166.45px;top:210.20px;font-size:13px;line-height:13px;color:#262626;">O</span>
<span class="t" style="left:1230.97px;top:210.20px;font-size:13px;line-height:13px;color:#262626;">P</span>
<span class="t" style="left:1294.45px;top:210.20px;font-size:13px;line-height:13px;color:#262626;">Q</span>
<div class="r cells" style="left:0;top:227px;width:1344px;height:451px;overflow:hidden">
<span class="t" style="left:27.47px;top:5.02px;font-size:12.5px;line-height:12.5px;letter-spacing:0.849px;color:#000;">Region</span>
<span class="t" style="left:78.77px;top:5.02px;font-size:12.5px;line-height:12.5px;letter-spacing:0.984px;color:#000;">Country</span>
<span class="t" style="left:186.25px;top:5.02px;font-size:12.5px;line-height:12.5px;letter-spacing:0.981px;color:#000;">Item Type</span>
<span class="t" style="left:288.83px;top:5.02px;font-size:12.5px;line-height:12.5px;letter-spacing:0.443px;color:#000;">Sales Channel</span>
<span class="t" style="left:382.81px;top:5.02px;font-size:12.5px;line-height:12.5px;letter-spacing:0.883px;color:#000;">Order Priority</span>
<span class="t" style="left:475.81px;top:5.02px;font-size:12.5px;line-height:12.5px;letter-spacing:0.907px;color:#000;">Order Date</span>
<span class="t" style="left:550.81px;top:5.02px;font-size:12.5px;line-height:12.5px;letter-spacing:0.827px;color:#000;">Order ID</span>
<span class="t" style="left:620.83px;top:5.02px;font-size:12.5px;line-height:12.5px;letter-spacing:0.647px;color:#000;">Ship Date</span>
<span class="t" style="left:695.44px;top:5.02px;font-size:12.5px;line-height:12.5px;letter-spacing:0.755px;color:#000;">Units Sold</span>
<span class="t" style="left:764.44px;top:5.02px;font-size:12.5px;line-height:12.5px;letter-spacing:0.835px;color:#000;">Unit Price</span>
<span class="t" style="left:831.44px;top:5.02px;font-size:12.5px;line-height:12.5px;letter-spacing:0.789px;color:#000;">Unit Cost</span>
<span class="t" style="left:895.12px;top:5.02px;font-size:12.5px;line-height:12.5px;letter-spacing:0.683px;color:#000;">Total Revenue</span>
<span class="t" style="left:992.12px;top:5.02px;font-size:12.5px;line-height:12.5px;letter-spacing:0.567px;color:#000;">Total Cost</span>
<span class="t" style="left:1066.12px;top:5.02px;font-size:12.5px;line-height:12.5px;letter-spacing:0.824px;color:#000;">Total Profit</span>
<span class="t" style="left:27.47px;top:25.02px;font-size:12.5px;line-height:12.5px;letter-spacing:1.025px;color:#000;">Europe</span>
<span class="t" style="left:78.37px;top:25.02px;font-size:12.5px;line-height:12.5px;letter-spacing:0.245px;color:#000;">Russia</span>
<span class="t" style="left:186.81px;top:25.02px;font-size:12.5px;line-height:12.5px;letter-spacing:0.649px;color:#000;">Office Supplies</span>
<span class="t" style="left:288.81px;top:25.02px;font-size:12.5px;line-height:12.5px;letter-spacing:1.111px;color:#000;">Offline</span>
<span class="t" style="left:382.37px;top:25.02px;font-size:12.5px;line-height:12.5px;color:#000;">L</span>
<span class="t" style="left:477.91px;top:25.02px;font-size:12.5px;line-height:12.5px;letter-spacing:0.633px;color:#000;">05/02/2014</span>
<span class="t" style="left:552.82px;top:25.02px;font-size:12.5px;line-height:12.5px;letter-spacing:0.117px;color:#000;">341417157</span>
<span class="t" style="left:622.91px;top:25.02px;font-size:12.5px;line-height:12.5px;letter-spacing:0.633px;color:#000;">05/08/2014</span>
<span class="t" style="left:731.35px;top:25.02px;font-size:12.5px;line-height:12.5px;letter-spacing:0.379px;color:#000;">1779</span>
<span class="t" style="left:764.77px;top:25.02px;font-size:12.5px;line-height:12.5px;letter-spacing:0.203px;color:#000;">651.21</span>
<span class="t" style="left:831.90px;top:25.02px;font-size:12.5px;line-height:12.5px;letter-spacing:0.163px;color:#000;">524.96</span>
<span class="t" style="left:894.45px;top:25.02px;font-size:12.5px;line-height:12.5px;letter-spacing:0.167px;color:#000;">1158502.59</span>
<span class="t" style="left:991.81px;top:25.02px;font-size:12.5px;line-height:12.5px;letter-spacing:0.108px;color:#000;">933903.84</span>
<span class="t" style="left:1065.77px;top:25.02px;font-size:12.5px;line-height:12.5px;letter-spacing:0.133px;color:#000;">224598.75</span>
<span class="t" style="left:27.47px;top:45.02px;font-size:12.5px;line-height:12.5px;letter-spacing:1.025px;color:#000;">Europe</span>
<span class="t" style="left:78.37px;top:45.02px;font-size:12.5px;line-height:12.5px;letter-spacing:0.724px;color:#000;">Bulgaria</span>
<span class="t" style="left:186.77px;top:45.02px;font-size:12.5px;line-height:12.5px;letter-spacing:0.751px;color:#000;">Clothes</span>
<span class="t" style="left:288.81px;top:45.02px;font-size:12.5px;line-height:12.5px;letter-spacing:1.025px;color:#000;">Online</span>
<span class="t" style="left:382.37px;top:45.02px;font-size:12.5px;line-height:12.5px;color:#000;">M</span>
<span class="t" style="left:476.11px;top:45.02px;font-size:12.5px;line-height:12.5px;letter-spacing:0.713px;color:#000;">4/23/2012</span>
<span class="t" style="left:552.71px;top:45.02px;font-size:12.5px;line-height:12.5px;letter-spacing:0.126px;color:#000;">972292029</span>
<span class="t" style="left:622.91px;top:45.02px;font-size:12.5px;line-height:12.5px;letter-spacing:0.662px;color:#000;">06/03/2012</span>
<span class="t" style="left:731.35px;top:45.02px;font-size:12.5px;line-height:12.5px;letter-spacing:0.365px;color:#000;">1673</span>
<span class="t" style="left:764.45px;top:45.02px;font-size:12.5px;line-height:12.5px;letter-spacing:0.253px;color:#000;">109.28</span>
<span class="t" style="left:831.92px;top:45.02px;font-size:12.5px;line-height:12.5px;letter-spacing:0.140px;color:#000;">35.84</span>
<span class="t" style="left:894.45px;top:45.02px;font-size:12.5px;line-height:12.5px;letter-spacing:0.154px;color:#000;">182825.44</span>
<span class="t" style="left:991.90px;top:45.02px;font-size:12.5px;line-height:12.5px;letter-spacing:0.142px;color:#000;">59960.32</span>
<span class="t" style="left:1065.45px;top:45.02px;font-size:12.5px;line-height:12.5px;letter-spacing:0.187px;color:#000;">122865.12</span>
<span class="t" style="left:27.47px;top:65.02px;font-size:12.5px;line-height:12.5px;letter-spacing:1.025px;color:#000;">Europe</span>
<span class="t" style="left:78.37px;top:65.02px;font-size:12.5px;line-height:12.5px;letter-spacing:1.293px;color:#000;">Norway</span>
<span class="t" style="left:186.37px;top:65.02px;font-size:12.5px;line-height:12.5px;letter-spacing:0.760px;color:#000;">Baby Food</span>
<span class="t" style="left:288.81px;top:65.02px;font-size:12.5px;line-height:12.5px;letter-spacing:1.025px;color:#000;">Online</span>
<span class="t" style="left:382.37px;top:65.02px;font-size:12.5px;line-height:12.5px;color:#000;">L</span>
<span class="t" style="left:475.90px;top:65.02px;font-size:12.5px;line-height:12.5px;letter-spacing:0.707px;color:#000;">5/14/2014</span>
<span class="t" style="left:552.76px;top:65.02px;font-size:12.5px;line-height:12.5px;letter-spacing:0.123px;color:#000;">819028031</span>
<span class="t" style="left:620.77px;top:65.02px;font-size:12.5px;line-height:12.5px;letter-spacing:0.724px;color:#000;">6/28/2014</span>
<span class="t" style="left:731.66px;top:65.02px;font-size:12.5px;line-height:12.5px;letter-spacing:0.241px;color:#000;">7450</span>
<span class="t" style="left:764.77px;top:65.02px;font-size:12.5px;line-height:12.5px;letter-spacing:0.188px;color:#000;">255.28</span>
<span class="t" style="left:831.45px;top:65.02px;font-size:12.5px;line-height:12.5px;letter-spacing:0.270px;color:#000;">159.42</span>
<span class="t" style="left:894.45px;top:65.02px;font-size:12.5px;line-height:12.5px;letter-spacing:0.156px;color:#000;">1901836.00</span>
<span class="t" style="left:991.45px;top:65.02px;font-size:12.5px;line-height:12.5px;letter-spacing:0.156px;color:#000;">1187679.00</span>
<span class="t" style="left:1065.76px;top:65.02px;font-size:12.5px;line-height:12.5px;letter-spacing:0.130px;color:#000;">714157.00</span>
<span class="t" style="left:27.47px;top:85.02px;font-size:12.5px;line-height:12.5px;letter-spacing:1.025px;color:#000;">Europe</span>
<span class="t" style="left:78.37px;top:85.02px;font-size:12.5px;line-height:12.5px;letter-spacing:1.023px;color:#000;">Portugal</span>
<span class="t" style="left:186.37px;top:85.02px;font-size:12.5px;line-height:12.5px;letter-spacing:0.760px;color:#000;">Baby Food</span>
<span class="t" style="left:288.81px;top:85.02px;font-size:12.5px;line-height:12.5px;letter-spacing:1.025px;color:#000;">Online</span>
<span class="t" style="left:382.37px;top:85.02px;font-size:12.5px;line-height:12.5px;color:#000;">H</span>
<span class="t" style="left:475.76px;top:85.02px;font-size:12.5px;line-height:12.5px;letter-spacing:0.745px;color:#000;">7/31/2015</span>
<span class="t" style="left:552.76px;top:85.02px;font-size:12.5px;line-height:12.5px;letter-spacing:0.123px;color:#000;">860673511</span>
<span class="t" style="left:622.91px;top:85.02px;font-size:12.5px;line-height:12.5px;letter-spacing:0.650px;color:#000;">09/03/2015</span>
<span class="t" style="left:731.35px;top:85.02px;font-size:12.5px;line-height:12.5px;letter-spacing:0.365px;color:#000;">1273</span>
<span class="t" style="left:764.77px;top:85.02px;font-size:12.5px;line-height:12.5px;letter-spacing:0.188px;color:#000;">255.28</span>
<span class="t" style="left:831.45px;top:85.02px;font-size:12.5px;line-height:12.5px;letter-spacing:0.270px;color:#000;">159.42</span>
<span class="t" style="left:894.92px;top:85.02px;font-size:12.5px;line-height:12.5px;letter-spacing:0.094px;color:#000;">324971.44</span>
<span class="t" style="left:991.77px;top:85.02px;font-size:12.5px;line-height:12.5px;letter-spacing:0.136px;color:#000;">202941.66</span>
<span class="t" style="left:1065.45px;top:85.02px;font-size:12.5px;line-height:12.5px;letter-spacing:0.176px;color:#000;">122029.78</span>
<span class="t" style="left:27.47px;top:105.02px;font-size:12.5px;line-height:12.5px;letter-spacing:1.025px;color:#000;">Europe</span>
<span class="t" style="left:78.37px;top:105.02px;font-size:12.5px;line-height:12.5px;letter-spacing:1.357px;color:#000;">Moldova</span>
<span class="t" style="left:186.37px;top:105.02px;font-size:12.5px;line-height:12.5px;letter-spacing:0.576px;color:#000;">Personal Care</span>
<span class="t" style="left:288.81px;top:105.02px;font-size:12.5px;line-height:12.5px;letter-spacing:1.025px;color:#000;">Online</span>
<span class="t" style="left:382.37px;top:105.02px;font-size:12.5px;line-height:12.5px;color:#000;">L</span>
<span class="t" style="left:477.91px;top:105.02px;font-size:12.5px;line-height:12.5px;letter-spacing:0.653px;color:#000;">05/07/2016</span>
<span class="t" style="left:552.66px;top:105.02px;font-size:12.5px;line-height:12.5px;letter-spacing:0.138px;color:#000;">740147912</span>
<span class="t" style="left:622.91px;top:105.02px;font-size:12.5px;line-height:12.5px;letter-spacing:0.653px;color:#000;">05/10/2016</span>
<span class="t" style="left:731.80px;top:105.02px;font-size:12.5px;line-height:12.5px;letter-spacing:0.194px;color:#000;">5070</span>
<span class="t" style="left:764.86px;top:105.02px;font-size:12.5px;line-height:12.5px;letter-spacing:0.203px;color:#000;">81.73</span>
<span class="t" style="left:831.90px;top:105.02px;font-size:12.5px;line-height:12.5px;letter-spacing:0.212px;color:#000;">56.67</span>
<span class="t" style="left:895.11px;top:105.02px;font-size:12.5px;line-height:12.5px;letter-spacing:0.086px;color:#000;">414371.10</span>
<span class="t" style="left:991.77px;top:105.02px;font-size:12.5px;line-height:12.5px;letter-spacing:0.129px;color:#000;">287316.90</span>
<span class="t" style="left:1065.45px;top:105.02px;font-size:12.5px;line-height:12.5px;letter-spacing:0.169px;color:#000;">127054.20</span>
<span class="t" style="left:27.47px;top:125.02px;font-size:12.5px;line-height:12.5px;letter-spacing:1.025px;color:#000;">Europe</span>
<span class="t" style="left:78.37px;top:125.02px;font-size:12.5px;line-height:12.5px;letter-spacing:0.753px;color:#000;">France</span>
<span class="t" style="left:186.77px;top:125.02px;font-size:12.5px;line-height:12.5px;letter-spacing:0.661px;color:#000;">Cosmetics</span>
<span class="t" style="left:288.81px;top:125.02px;font-size:12.5px;line-height:12.5px;letter-spacing:1.025px;color:#000;">Online</span>
<span class="t" style="left:382.37px;top:125.02px;font-size:12.5px;line-height:12.5px;color:#000;">H</span>
<span class="t" style="left:475.90px;top:125.02px;font-size:12.5px;line-height:12.5px;letter-spacing:0.740px;color:#000;">5/22/2017</span>
<span class="t" style="left:552.76px;top:125.02px;font-size:12.5px;line-height:12.5px;letter-spacing:0.115px;color:#000;">898523128</span>
<span class="t" style="left:622.91px;top:125.02px;font-size:12.5px;line-height:12.5px;letter-spacing:0.662px;color:#000;">06/05/2017</span>
<span class="t" style="left:731.35px;top:125.02px;font-size:12.5px;line-height:12.5px;letter-spacing:0.356px;color:#000;">1815</span>
<span class="t" style="left:765.11px;top:125.02px;font-size:12.5px;line-height:12.5px;letter-spacing:0.109px;color:#000;">437.20</span>
<span class="t" style="left:831.77px;top:125.02px;font-size:12.5px;line-height:12.5px;letter-spacing:0.189px;color:#000;">263.33</span>
<span class="t" style="left:894.76px;top:125.02px;font-size:12.5px;line-height:12.5px;letter-spacing:0.130px;color:#000;">793518.00</span>
<span class="t" style="left:992.11px;top:125.02px;font-size:12.5px;line-height:12.5px;letter-spacing:0.090px;color:#000;">477943.95</span>
<span class="t" style="left:1065.92px;top:125.02px;font-size:12.5px;line-height:12.5px;letter-spacing:0.114px;color:#000;">315574.05</span>
<span class="t" style="left:27.47px;top:145.02px;font-size:12.5px;line-height:12.5px;letter-spacing:1.025px;color:#000;">Europe</span>
<span class="t" style="left:78.37px;top:145.02px;font-size:12.5px;line-height:12.5px;letter-spacing:1.293px;color:#000;">Norway</span>
<span class="t" style="left:186.37px;top:145.02px;font-size:12.5px;line-height:12.5px;letter-spacing:0.632px;color:#000;">Beverages</span>
<span class="t" style="left:288.81px;top:145.02px;font-size:12.5px;line-height:12.5px;letter-spacing:1.111px;color:#000;">Offline</span>
<span class="t" style="left:382.77px;top:145.02px;font-size:12.5px;line-height:12.5px;color:#000;">C</span>
<span class="t" style="left:475.76px;top:145.02px;font-size:12.5px;line-height:12.5px;letter-spacing:0.725px;color:#000;">7/18/2014</span>
<span class="t" style="left:553.01px;top:145.02px;font-size:12.5px;line-height:12.5px;letter-spacing:0.084px;color:#000;">435608613</span>
<span class="t" style="left:620.76px;top:145.02px;font-size:12.5px;line-height:12.5px;letter-spacing:0.725px;color:#000;">7/30/2014</span>
<span class="t" style="left:731.80px;top:145.02px;font-size:12.5px;line-height:12.5px;letter-spacing:0.153px;color:#000;">5124</span>
<span class="t" style="left:765.11px;top:145.02px;font-size:12.5px;line-height:12.5px;letter-spacing:0.133px;color:#000;">47.45</span>
<span class="t" style="left:831.92px;top:145.02px;font-size:12.5px;line-height:12.5px;letter-spacing:0.197px;color:#000;">31.79</span>
<span class="t" style="left:894.77px;top:145.02px;font-size:12.5px;line-height:12.5px;letter-spacing:0.129px;color:#000;">243133.80</span>
<span class="t" style="left:991.45px;top:145.02px;font-size:12.5px;line-height:12.5px;letter-spacing:0.177px;color:#000;">162891.96</span>
<span class="t" style="left:1065.86px;top:145.02px;font-size:12.5px;line-height:12.5px;letter-spacing:0.110px;color:#000;">80241.84</span>
<span class="t" style="left:27.47px;top:165.02px;font-size:12.5px;line-height:12.5px;letter-spacing:1.025px;color:#000;">Europe</span>
<span class="t" style="left:78.83px;top:165.02px;font-size:12.5px;line-height:12.5px;letter-spacing:0.875px;color:#000;">Switzerland</span>
<span class="t" style="left:186.77px;top:165.02px;font-size:12.5px;line-height:12.5px;letter-spacing:0.661px;color:#000;">Cosmetics</span>
<span class="t" style="left:288.81px;top:165.02px;font-size:12.5px;line-height:12.5px;letter-spacing:1.111px;color:#000;">Offline</span>
<span class="t" style="left:382.37px;top:165.02px;font-size:12.5px;line-height:12.5px;color:#000;">M</span>
<span class="t" style="left:475.81px;top:165.02px;font-size:12.5px;line-height:12.5px;letter-spacing:0.751px;color:#000;">9/17/2012</span>
<span class="t" style="left:552.67px;top:165.02px;font-size:12.5px;line-height:12.5px;letter-spacing:0.103px;color:#000;">249693334</span>
<span class="t" style="left:620.45px;top:165.02px;font-size:12.5px;line-height:12.5px;letter-spacing:0.713px;color:#000;">10/20/2012</span>
<span class="t" style="left:731.76px;top:165.02px;font-size:12.5px;line-height:12.5px;letter-spacing:0.249px;color:#000;">8661</span>
<span class="t" style="left:765.11px;top:165.02px;font-size:12.5px;line-height:12.5px;letter-spacing:0.109px;color:#000;">437.20</span>
<span class="t" style="left:831.77px;top:165.02px;font-size:12.5px;line-height:12.5px;letter-spacing:0.189px;color:#000;">263.33</span>
<span class="t" style="left:894.92px;top:165.02px;font-size:12.5px;line-height:12.5px;letter-spacing:0.103px;color:#000;">3786589.20</span>
<span class="t" style="left:991.77px;top:165.02px;font-size:12.5px;line-height:12.5px;letter-spacing:0.126px;color:#000;">2280701.13</span>
<span class="t" style="left:1065.45px;top:165.02px;font-size:12.5px;line-height:12.5px;letter-spacing:0.171px;color:#000;">1505888.07</span>
<span class="t" style="left:27.47px;top:185.02px;font-size:12.5px;line-height:12.5px;letter-spacing:1.025px;color:#000;">Europe</span>
<span class="t" style="left:78.37px;top:185.02px;font-size:12.5px;line-height:12.5px;letter-spacing:0.724px;color:#000;">Bulgaria</span>
<span class="t" style="left:186.81px;top:185.02px;font-size:12.5px;line-height:12.5px;letter-spacing:0.649px;color:#000;">Office Supplies</span>
<span class="t" style="left:288.81px;top:185.02px;font-size:12.5px;line-height:12.5px;letter-spacing:1.025px;color:#000;">Online</span>
<span class="t" style="left:382.37px;top:185.02px;font-size:12.5px;line-height:12.5px;color:#000;">M</span>
<span class="t" style="left:475.77px;top:185.02px;font-size:12.5px;line-height:12.5px;letter-spacing:0.756px;color:#000;">2/16/2012</span>
<span class="t" style="left:552.35px;top:185.02px;font-size:12.5px;line-height:12.5px;letter-spacing:0.167px;color:#000;">189965903</span>
<span class="t" style="left:620.77px;top:185.02px;font-size:12.5px;line-height:12.5px;letter-spacing:0.756px;color:#000;">2/28/2012</span>
<span class="t" style="left:731.82px;top:185.02px;font-size:12.5px;line-height:12.5px;letter-spacing:0.232px;color:#000;">3987</span>
<span class="t" style="left:764.77px;top:185.02px;font-size:12.5px;line-height:12.5px;letter-spacing:0.203px;color:#000;">651.21</span>
<span class="t" style="left:831.90px;top:185.02px;font-size:12.5px;line-height:12.5px;letter-spacing:0.163px;color:#000;">524.96</span>
<span class="t" style="left:894.77px;top:185.02px;font-size:12.5px;line-height:12.5px;letter-spacing:0.135px;color:#000;">2596374.27</span>
<span class="t" style="left:991.77px;top:185.02px;font-size:12.5px;line-height:12.5px;letter-spacing:0.135px;color:#000;">2093015.52</span>
<span class="t" style="left:1065.90px;top:185.02px;font-size:12.5px;line-height:12.5px;letter-spacing:0.117px;color:#000;">503358.75</span>
<span class="t" style="left:27.47px;top:205.02px;font-size:12.5px;line-height:12.5px;letter-spacing:1.025px;color:#000;">Europe</span>
<span class="t" style="left:78.83px;top:205.02px;font-size:12.5px;line-height:12.5px;letter-spacing:0.471px;color:#000;">Slovakia</span>
<span class="t" style="left:187.35px;top:205.02px;font-size:12.5px;line-height:12.5px;letter-spacing:0.679px;color:#000;">Vegetables</span>
<span class="t" style="left:288.81px;top:205.02px;font-size:12.5px;line-height:12.5px;letter-spacing:1.025px;color:#000;">Online</span>
<span class="t" style="left:382.37px;top:205.02px;font-size:12.5px;line-height:12.5px;color:#000;">H</span>
<span class="t" style="left:477.45px;top:205.02px;font-size:12.5px;line-height:12.5px;letter-spacing:0.713px;color:#000;">10/06/2012</span>
<span class="t" style="left:552.66px;top:205.02px;font-size:12.5px;line-height:12.5px;letter-spacing:0.138px;color:#000;">759224212</span>
<span class="t" style="left:622.45px;top:205.02px;font-size:12.5px;line-height:12.5px;letter-spacing:0.713px;color:#000;">11/10/2012</span>
<span class="t" style="left:738.35px;top:205.02px;font-size:12.5px;line-height:12.5px;letter-spacing:0.553px;color:#000;">171</span>
<span class="t" style="left:764.45px;top:205.02px;font-size:12.5px;line-height:12.5px;letter-spacing:0.254px;color:#000;">154.06</span>
<span class="t" style="left:831.81px;top:205.02px;font-size:12.5px;line-height:12.5px;letter-spacing:0.214px;color:#000;">90.93</span>
<span class="t" style="left:894.77px;top:205.02px;font-size:12.5px;line-height:12.5px;letter-spacing:0.149px;color:#000;">26344.26</span>
<span class="t" style="left:991.45px;top:205.02px;font-size:12.5px;line-height:12.5px;letter-spacing:0.195px;color:#000;">15549.03</span>
<span class="t" style="left:1065.45px;top:205.02px;font-size:12.5px;line-height:12.5px;letter-spacing:0.195px;color:#000;">10795.23</span>
<span class="t" style="left:27.47px;top:225.02px;font-size:12.5px;line-height:12.5px;letter-spacing:1.025px;color:#000;">Europe</span>
<span class="t" style="left:78.25px;top:225.02px;font-size:12.5px;line-height:12.5px;letter-spacing:0.966px;color:#000;">Iceland</span>
<span class="t" style="left:186.77px;top:225.02px;font-size:12.5px;line-height:12.5px;letter-spacing:0.661px;color:#000;">Cosmetics</span>
<span class="t" style="left:288.81px;top:225.02px;font-size:12.5px;line-height:12.5px;letter-spacing:1.025px;color:#000;">Online</span>
<span class="t" style="left:382.77px;top:225.02px;font-size:12.5px;line-height:12.5px;color:#000;">C</span>
<span class="t" style="left:475.45px;top:225.02px;font-size:12.5px;line-height:12.5px;letter-spacing:0.704px;color:#000;">12/31/2016</span>
<span class="t" style="left:552.82px;top:225.02px;font-size:12.5px;line-height:12.5px;letter-spacing:0.115px;color:#000;">331438481</span>
<span class="t" style="left:620.45px;top:225.02px;font-size:12.5px;line-height:12.5px;letter-spacing:0.704px;color:#000;">12/31/2016</span>
<span class="t" style="left:731.76px;top:225.02px;font-size:12.5px;line-height:12.5px;letter-spacing:0.255px;color:#000;">8867</span>
<span class="t" style="left:765.11px;top:225.02px;font-size:12.5px;line-height:12.5px;letter-spacing:0.109px;color:#000;">437.20</span>
<span class="t" style="left:831.77px;top:225.02px;font-size:12.5px;line-height:12.5px;letter-spacing:0.189px;color:#000;">263.33</span>
<span class="t" style="left:894.92px;top:225.02px;font-size:12.5px;line-height:12.5px;letter-spacing:0.103px;color:#000;">3876652.40</span>
<span class="t" style="left:991.77px;top:225.02px;font-size:12.5px;line-height:12.5px;letter-spacing:0.133px;color:#000;">2334947.11</span>
<span class="t" style="left:1065.45px;top:225.02px;font-size:12.5px;line-height:12.5px;letter-spacing:0.167px;color:#000;">1541705.29</span>
<span class="t" style="left:27.47px;top:245.02px;font-size:12.5px;line-height:12.5px;letter-spacing:1.025px;color:#000;">Europe</span>
<span class="t" style="left:78.83px;top:245.02px;font-size:12.5px;line-height:12.5px;letter-spacing:0.875px;color:#000;">Switzerland</span>
<span class="t" style="left:186.37px;top:245.02px;font-size:12.5px;line-height:12.5px;letter-spacing:0.576px;color:#000;">Personal Care</span>
<span class="t" style="left:288.81px;top:245.02px;font-size:12.5px;line-height:12.5px;letter-spacing:1.025px;color:#000;">Online</span>
<span class="t" style="left:382.37px;top:245.02px;font-size:12.5px;line-height:12.5px;color:#000;">M</span>
<span class="t" style="left:475.45px;top:245.02px;font-size:12.5px;line-height:12.5px;letter-spacing:0.698px;color:#000;">12/23/2010</span>
<span class="t" style="left:552.67px;top:245.02px;font-size:12.5px;line-height:12.5px;letter-spacing:0.119px;color:#000;">617667090</span>
<span class="t" style="left:620.45px;top:245.02px;font-size:12.5px;line-height:12.5px;letter-spacing:0.794px;color:#000;">1/31/2011</span>
<span class="t" style="left:738.67px;top:245.02px;font-size:12.5px;line-height:12.5px;letter-spacing:0.361px;color:#000;">273</span>
<span class="t" style="left:764.86px;top:245.02px;font-size:12.5px;line-height:12.5px;letter-spacing:0.203px;color:#000;">81.73</span>
<span class="t" style="left:831.90px;top:245.02px;font-size:12.5px;line-height:12.5px;letter-spacing:0.212px;color:#000;">56.67</span>
<span class="t" style="left:894.77px;top:245.02px;font-size:12.5px;line-height:12.5px;letter-spacing:0.155px;color:#000;">22312.29</span>
<span class="t" style="left:991.45px;top:245.02px;font-size:12.5px;line-height:12.5px;letter-spacing:0.204px;color:#000;">15470.91</span>
<span class="t" style="left:1065.77px;top:245.02px;font-size:12.5px;line-height:12.5px;letter-spacing:0.166px;color:#000;">6841.38</span>
<span class="t" style="left:27.47px;top:265.02px;font-size:12.5px;line-height:12.5px;letter-spacing:1.025px;color:#000;">Europe</span>
<span class="t" style="left:78.37px;top:265.02px;font-size:12.5px;line-height:12.5px;letter-spacing:1.101px;color:#000;">Macedonia</span>
<span class="t" style="left:186.77px;top:265.02px;font-size:12.5px;line-height:12.5px;letter-spacing:0.751px;color:#000;">Clothes</span>
<span class="t" style="left:288.81px;top:265.02px;font-size:12.5px;line-height:12.5px;letter-spacing:1.111px;color:#000;">Offline</span>
<span class="t" style="left:382.77px;top:265.02px;font-size:12.5px;line-height:12.5px;color:#000;">C</span>
<span class="t" style="left:475.45px;top:265.02px;font-size:12.5px;line-height:12.5px;letter-spacing:0.684px;color:#000;">10/14/2014</span>
<span class="t" style="left:552.66px;top:265.02px;font-size:12.5px;line-height:12.5px;letter-spacing:0.128px;color:#000;">787399423</span>
<span class="t" style="left:620.45px;top:265.02px;font-size:12.5px;line-height:12.5px;letter-spacing:0.684px;color:#000;">11/14/2014</span>
<span class="t" style="left:731.66px;top:265.02px;font-size:12.5px;line-height:12.5px;letter-spacing:0.287px;color:#000;">7842</span>
<span class="t" style="left:764.45px;top:265.02px;font-size:12.5px;line-height:12.5px;letter-spacing:0.253px;color:#000;">109.28</span>
<span class="t" style="left:831.92px;top:265.02px;font-size:12.5px;line-height:12.5px;letter-spacing:0.140px;color:#000;">35.84</span>
<span class="t" style="left:894.86px;top:265.02px;font-size:12.5px;line-height:12.5px;letter-spacing:0.126px;color:#000;">856973.76</span>
<span class="t" style="left:991.77px;top:265.02px;font-size:12.5px;line-height:12.5px;letter-spacing:0.135px;color:#000;">281057.28</span>
<span class="t" style="left:1065.90px;top:265.02px;font-size:12.5px;line-height:12.5px;letter-spacing:0.119px;color:#000;">575916.48</span>
<span class="t" style="left:27.47px;top:285.02px;font-size:12.5px;line-height:12.5px;letter-spacing:1.025px;color:#000;">Europe</span>
<span class="t" style="left:79.38px;top:285.02px;font-size:12.5px;line-height:12.5px;letter-spacing:0.707px;color:#000;">Albania</span>
<span class="t" style="left:186.77px;top:285.02px;font-size:12.5px;line-height:12.5px;letter-spacing:0.751px;color:#000;">Clothes</span>
<span class="t" style="left:288.81px;top:285.02px;font-size:12.5px;line-height:12.5px;letter-spacing:1.025px;color:#000;">Online</span>
<span class="t" style="left:382.77px;top:285.02px;font-size:12.5px;line-height:12.5px;color:#000;">C</span>
<span class="t" style="left:477.91px;top:285.02px;font-size:12.5px;line-height:12.5px;letter-spacing:0.646px;color:#000;">02/02/2010</span>
<span class="t" style="left:552.82px;top:285.02px;font-size:12.5px;line-height:12.5px;letter-spacing:0.113px;color:#000;">385383069</span>
<span class="t" style="left:620.92px;top:285.02px;font-size:12.5px;line-height:12.5px;letter-spacing:0.719px;color:#000;">3/18/2010</span>
<span class="t" style="left:731.67px;top:285.02px;font-size:12.5px;line-height:12.5px;letter-spacing:0.271px;color:#000;">2269</span>
<span class="t" style="left:764.45px;top:285.02px;font-size:12.5px;line-height:12.5px;letter-spacing:0.253px;color:#000;">109.28</span>
<span class="t" style="left:831.92px;top:285.02px;font-size:12.5px;line-height:12.5px;letter-spacing:0.140px;color:#000;">35.84</span>
<span class="t" style="left:894.77px;top:285.02px;font-size:12.5px;line-height:12.5px;letter-spacing:0.146px;color:#000;">247956.32</span>
<span class="t" style="left:991.86px;top:285.02px;font-size:12.5px;line-height:12.5px;letter-spacing:0.137px;color:#000;">81320.96</span>
<span class="t" style="left:1065.45px;top:285.02px;font-size:12.5px;line-height:12.5px;letter-spacing:0.177px;color:#000;">166635.36</span>
<span class="t" style="left:27.47px;top:305.02px;font-size:12.5px;line-height:12.5px;letter-spacing:1.025px;color:#000;">Europe</span>
<span class="t" style="left:79.38px;top:305.02px;font-size:12.5px;line-height:12.5px;letter-spacing:0.764px;color:#000;">Austria</span>
<span class="t" style="left:186.77px;top:305.02px;font-size:12.5px;line-height:12.5px;letter-spacing:0.661px;color:#000;">Cosmetics</span>
<span class="t" style="left:288.81px;top:305.02px;font-size:12.5px;line-height:12.5px;letter-spacing:1.111px;color:#000;">Offline</span>
<span class="t" style="left:382.37px;top:305.02px;font-size:12.5px;line-height:12.5px;color:#000;">H</span>
<span class="t" style="left:475.77px;top:305.02px;font-size:12.5px;line-height:12.5px;letter-spacing:0.743px;color:#000;">2/23/2015</span>
<span class="t" style="left:552.76px;top:305.02px;font-size:12.5px;line-height:12.5px;letter-spacing:0.113px;color:#000;">868214595</span>
<span class="t" style="left:622.91px;top:305.02px;font-size:12.5px;line-height:12.5px;letter-spacing:0.650px;color:#000;">03/02/2015</span>
<span class="t" style="left:731.67px;top:305.02px;font-size:12.5px;line-height:12.5px;letter-spacing:0.283px;color:#000;">2847</span>
<span class="t" style="left:765.11px;top:305.02px;font-size:12.5px;line-height:12.5px;letter-spacing:0.109px;color:#000;">437.20</span>
<span class="t" style="left:831.77px;top:305.02px;font-size:12.5px;line-height:12.5px;letter-spacing:0.189px;color:#000;">263.33</span>
<span class="t" style="left:894.45px;top:305.02px;font-size:12.5px;line-height:12.5px;letter-spacing:0.156px;color:#000;">1244708.40</span>
<span class="t" style="left:991.76px;top:305.02px;font-size:12.5px;line-height:12.5px;letter-spacing:0.145px;color:#000;">749700.51</span>
<span class="t" style="left:1066.11px;top:305.02px;font-size:12.5px;line-height:12.5px;letter-spacing:0.099px;color:#000;">495007.89</span>
<span class="t" style="left:27.47px;top:325.02px;font-size:12.5px;line-height:12.5px;letter-spacing:1.025px;color:#000;">Europe</span>
<span class="t" style="left:78.44px;top:325.02px;font-size:12.5px;line-height:12.5px;letter-spacing:1.010px;color:#000;">United Kingdom</span>
<span class="t" style="left:186.37px;top:325.02px;font-size:12.5px;line-height:12.5px;letter-spacing:1.049px;color:#000;">Household</span>
<span class="t" style="left:288.81px;top:325.02px;font-size:12.5px;line-height:12.5px;letter-spacing:1.025px;color:#000;">Online</span>
<span class="t" style="left:382.37px;top:325.02px;font-size:12.5px;line-height:12.5px;color:#000;">L</span>
<span class="t" style="left:477.91px;top:325.02px;font-size:12.5px;line-height:12.5px;letter-spacing:0.662px;color:#000;">01/05/2012</span>
<span class="t" style="left:552.71px;top:325.02px;font-size:12.5px;line-height:12.5px;letter-spacing:0.118px;color:#000;">955357205</span>
<span class="t" style="left:620.77px;top:325.02px;font-size:12.5px;line-height:12.5px;letter-spacing:0.756px;color:#000;">2/14/2012</span>
<span class="t" style="left:738.67px;top:325.02px;font-size:12.5px;line-height:12.5px;letter-spacing:0.401px;color:#000;">282</span>
<span class="t" style="left:764.77px;top:325.02px;font-size:12.5px;line-height:12.5px;letter-spacing:0.206px;color:#000;">668.27</span>
<span class="t" style="left:831.90px;top:325.02px;font-size:12.5px;line-height:12.5px;letter-spacing:0.127px;color:#000;">502.54</span>
<span class="t" style="left:894.45px;top:325.02px;font-size:12.5px;line-height:12.5px;letter-spacing:0.154px;color:#000;">188452.14</span>
<span class="t" style="left:991.45px;top:325.02px;font-size:12.5px;line-height:12.5px;letter-spacing:0.176px;color:#000;">141716.28</span>
<span class="t" style="left:1066.11px;top:325.02px;font-size:12.5px;line-height:12.5px;letter-spacing:0.100px;color:#000;">46735.86</span>
<span class="t" style="left:27.47px;top:345.02px;font-size:12.5px;line-height:12.5px;letter-spacing:1.025px;color:#000;">Europe</span>
<span class="t" style="left:78.83px;top:345.02px;font-size:12.5px;line-height:12.5px;letter-spacing:0.873px;color:#000;">San Marino</span>
<span class="t" style="left:186.37px;top:345.02px;font-size:12.5px;line-height:12.5px;letter-spacing:0.760px;color:#000;">Baby Food</span>
<span class="t" style="left:288.81px;top:345.02px;font-size:12.5px;line-height:12.5px;letter-spacing:1.025px;color:#000;">Online</span>
<span class="t" style="left:382.37px;top:345.02px;font-size:12.5px;line-height:12.5px;color:#000;">L</span>
<span class="t" style="left:475.77px;top:345.02px;font-size:12.5px;line-height:12.5px;letter-spacing:0.747px;color:#000;">6/26/2013</span>
<span class="t" style="left:552.80px;top:345.02px;font-size:12.5px;line-height:12.5px;letter-spacing:0.107px;color:#000;">569662845</span>
<span class="t" style="left:622.91px;top:345.02px;font-size:12.5px;line-height:12.5px;letter-spacing:0.653px;color:#000;">07/01/2013</span>
<span class="t" style="left:732.01px;top:345.02px;font-size:12.5px;line-height:12.5px;letter-spacing:0.123px;color:#000;">4750</span>
<span class="t" style="left:764.77px;top:345.02px;font-size:12.5px;line-height:12.5px;letter-spacing:0.188px;color:#000;">255.28</span>
<span class="t" style="left:831.45px;top:345.02px;font-size:12.5px;line-height:12.5px;letter-spacing:0.270px;color:#000;">159.42</span>
<span class="t" style="left:894.45px;top:345.02px;font-size:12.5px;line-height:12.5px;letter-spacing:0.156px;color:#000;">1212580.00</span>
<span class="t" style="left:991.76px;top:345.02px;font-size:12.5px;line-height:12.5px;letter-spacing:0.130px;color:#000;">757245.00</span>
<span class="t" style="left:1066.11px;top:345.02px;font-size:12.5px;line-height:12.5px;letter-spacing:0.086px;color:#000;">455335.00</span>
<span class="t" style="left:27.47px;top:365.02px;font-size:12.5px;line-height:12.5px;letter-spacing:1.025px;color:#000;">Europe</span>
<span class="t" style="left:78.37px;top:365.02px;font-size:12.5px;line-height:12.5px;letter-spacing:0.877px;color:#000;">Lithuania</span>
<span class="t" style="left:186.81px;top:365.02px;font-size:12.5px;line-height:12.5px;letter-spacing:0.649px;color:#000;">Office Supplies</span>
<span class="t" style="left:288.81px;top:365.02px;font-size:12.5px;line-height:12.5px;letter-spacing:1.111px;color:#000;">Offline</span>
<span class="t" style="left:382.37px;top:365.02px;font-size:12.5px;line-height:12.5px;color:#000;">H</span>
<span class="t" style="left:475.45px;top:365.02px;font-size:12.5px;line-height:12.5px;letter-spacing:0.698px;color:#000;">10/24/2010</span>
<span class="t" style="left:552.35px;top:365.02px;font-size:12.5px;line-height:12.5px;letter-spacing:0.159px;color:#000;">166460740</span>
<span class="t" style="left:620.45px;top:365.02px;font-size:12.5px;line-height:12.5px;letter-spacing:0.698px;color:#000;">11/17/2010</span>
<span class="t" style="left:731.76px;top:365.02px;font-size:12.5px;line-height:12.5px;letter-spacing:0.255px;color:#000;">8287</span>
<span class="t" style="left:764.77px;top:365.02px;font-size:12.5px;line-height:12.5px;letter-spacing:0.203px;color:#000;">651.21</span>
<span class="t" style="left:831.90px;top:365.02px;font-size:12.5px;line-height:12.5px;letter-spacing:0.163px;color:#000;">524.96</span>
<span class="t" style="left:894.90px;top:365.02px;font-size:12.5px;line-height:12.5px;letter-spacing:0.121px;color:#000;">5396577.27</span>
<span class="t" style="left:992.11px;top:365.02px;font-size:12.5px;line-height:12.5px;letter-spacing:0.097px;color:#000;">4350343.52</span>
<span class="t" style="left:1065.45px;top:365.02px;font-size:12.5px;line-height:12.5px;letter-spacing:0.160px;color:#000;">1046233.75</span>
<span class="t" style="left:27.47px;top:385.02px;font-size:12.5px;line-height:12.5px;letter-spacing:1.025px;color:#000;">Europe</span>
<span class="t" style="left:78.37px;top:385.02px;font-size:12.5px;line-height:12.5px;letter-spacing:1.494px;color:#000;">Monaco</span>
<span class="t" style="left:186.37px;top:385.02px;font-size:12.5px;line-height:12.5px;letter-spacing:0.760px;color:#000;">Baby Food</span>
<span class="t" style="left:288.81px;top:385.02px;font-size:12.5px;line-height:12.5px;letter-spacing:1.111px;color:#000;">Offline</span>
<span class="t" style="left:382.37px;top:385.02px;font-size:12.5px;line-height:12.5px;color:#000;">H</span>
<span class="t" style="left:475.90px;top:385.02px;font-size:12.5px;line-height:12.5px;letter-spacing:0.740px;color:#000;">5/29/2012</span>
<span class="t" style="left:552.67px;top:385.02px;font-size:12.5px;line-height:12.5px;letter-spacing:0.137px;color:#000;">688288152</span>
<span class="t" style="left:622.91px;top:385.02px;font-size:12.5px;line-height:12.5px;letter-spacing:0.662px;color:#000;">06/02/2012</span>
<span class="t" style="left:731.76px;top:385.02px;font-size:12.5px;line-height:12.5px;letter-spacing:0.167px;color:#000;">8614</span>
<span class="t" style="left:764.77px;top:385.02px;font-size:12.5px;line-height:12.5px;letter-spacing:0.188px;color:#000;">255.28</span>
<span class="t" style="left:831.45px;top:385.02px;font-size:12.5px;line-height:12.5px;letter-spacing:0.270px;color:#000;">159.42</span>
<span class="t" style="left:894.77px;top:385.02px;font-size:12.5px;line-height:12.5px;letter-spacing:0.135px;color:#000;">2198981.92</span>
<span class="t" style="left:991.45px;top:385.02px;font-size:12.5px;line-height:12.5px;letter-spacing:0.162px;color:#000;">1373243.88</span>
<span class="t" style="left:1065.86px;top:385.02px;font-size:12.5px;line-height:12.5px;letter-spacing:0.103px;color:#000;">825738.04</span>
<span class="t" style="left:27.47px;top:405.02px;font-size:12.5px;line-height:12.5px;letter-spacing:1.025px;color:#000;">Europe</span>
<span class="t" style="left:78.83px;top:405.02px;font-size:12.5px;line-height:12.5px;letter-spacing:0.644px;color:#000;">Spain</span>
<span class="t" style="left:186.37px;top:405.02px;font-size:12.5px;line-height:12.5px;letter-spacing:1.049px;color:#000;">Household</span>
<span class="t" style="left:288.81px;top:405.02px;font-size:12.5px;line-height:12.5px;letter-spacing:1.111px;color:#000;">Offline</span>
<span class="t" style="left:382.37px;top:405.02px;font-size:12.5px;line-height:12.5px;color:#000;">L</span>
<span class="t" style="left:475.45px;top:405.02px;font-size:12.5px;line-height:12.5px;letter-spacing:0.713px;color:#000;">10/21/2012</span>
<span class="t" style="left:552.67px;top:405.02px;font-size:12.5px;line-height:12.5px;letter-spacing:0.103px;color:#000;">213487374</span>
<span class="t" style="left:620.45px;top:405.02px;font-size:12.5px;line-height:12.5px;letter-spacing:0.713px;color:#000;">11/30/2012</span>
<span class="t" style="left:732.01px;top:405.02px;font-size:12.5px;line-height:12.5px;letter-spacing:0.143px;color:#000;">4513</span>
<span class="t" style="left:764.77px;top:405.02px;font-size:12.5px;line-height:12.5px;letter-spacing:0.206px;color:#000;">668.27</span>
<span class="t" style="left:831.90px;top:405.02px;font-size:12.5px;line-height:12.5px;letter-spacing:0.127px;color:#000;">502.54</span>
<span class="t" style="left:894.92px;top:405.02px;font-size:12.5px;line-height:12.5px;letter-spacing:0.116px;color:#000;">3015902.51</span>
<span class="t" style="left:991.77px;top:405.02px;font-size:12.5px;line-height:12.5px;letter-spacing:0.135px;color:#000;">2267963.02</span>
<span class="t" style="left:1065.76px;top:405.02px;font-size:12.5px;line-height:12.5px;letter-spacing:0.143px;color:#000;">747939.49</span>
<span class="t" style="left:27.47px;top:425.02px;font-size:12.5px;line-height:12.5px;letter-spacing:1.025px;color:#000;">Europe</span>
<span class="t" style="left:78.83px;top:425.02px;font-size:12.5px;line-height:12.5px;letter-spacing:0.567px;color:#000;">Slovenia</span>
<span class="t" style="left:186.37px;top:425.02px;font-size:12.5px;line-height:12.5px;letter-spacing:0.632px;color:#000;">Beverages</span>
<span class="t" style="left:288.81px;top:425.02px;font-size:12.5px;line-height:12.5px;letter-spacing:1.111px;color:#000;">Offline</span>
<span class="t" style="left:382.77px;top:425.02px;font-size:12.5px;line-height:12.5px;color:#000;">C</span>
<span class="t" style="left:475.45px;top:425.02px;font-size:12.5px;line-height:12.5px;letter-spacing:0.704px;color:#000;">10/23/2016</span>
<span class="t" style="left:552.82px;top:425.02px;font-size:12.5px;line-height:12.5px;letter-spacing:0.117px;color:#000;">345718562</span>
<span class="t" style="left:620.45px;top:425.02px;font-size:12.5px;line-height:12.5px;letter-spacing:0.704px;color:#000;">11/25/2016</span>
<span class="t" style="left:732.01px;top:425.02px;font-size:12.5px;line-height:12.5px;letter-spacing:0.123px;color:#000;">4660</span>
<span class="t" style="left:765.11px;top:425.02px;font-size:12.5px;line-height:12.5px;letter-spacing:0.133px;color:#000;">47.45</span>
<span class="t" style="left:831.92px;top:425.02px;font-size:12.5px;line-height:12.5px;letter-spacing:0.197px;color:#000;">31.79</span>
<span class="t" style="left:894.77px;top:425.02px;font-size:12.5px;line-height:12.5px;letter-spacing:0.129px;color:#000;">221117.00</span>
<span class="t" style="left:991.45px;top:425.02px;font-size:12.5px;line-height:12.5px;letter-spacing:0.169px;color:#000;">148141.40</span>
<span class="t" style="left:1065.76px;top:425.02px;font-size:12.5px;line-height:12.5px;letter-spacing:0.142px;color:#000;">72975.60</span>
<span class="t" style="left:27.47px;top:445.02px;font-size:12.5px;line-height:12.5px;letter-spacing:1.025px;color:#000;">Europe</span>
<span class="t" style="left:78.37px;top:445.02px;font-size:12.5px;line-height:12.5px;letter-spacing:0.861px;color:#000;">Romania</span>
<span class="t" style="left:186.77px;top:445.02px;font-size:12.5px;line-height:12.5px;letter-spacing:0.661px;color:#000;">Cosmetics</span>
<span class="t" style="left:288.81px;top:445.02px;font-size:12.5px;line-height:12.5px;letter-spacing:1.025px;color:#000;">Online</span>
<span class="t" style="left:382.37px;top:445.02px;font-size:12.5px;line-height:12.5px;color:#000;">H</span>
<span class="t" style="left:475.45px;top:445.02px;font-size:12.5px;line-height:12.5px;letter-spacing:0.698px;color:#000;">11/26/2010</span>
<span class="t" style="left:552.67px;top:445.02px;font-size:12.5px;line-height:12.5px;letter-spacing:0.104px;color:#000;">660643374</span>
<span class="t" style="left:620.45px;top:445.02px;font-size:12.5px;line-height:12.5px;letter-spacing:0.698px;color:#000;">12/25/2010</span>
<span class="t" style="left:731.66px;top:445.02px;font-size:12.5px;line-height:12.5px;letter-spacing:0.241px;color:#000;">7910</span>
<span class="t" style="left:765.11px;top:445.02px;font-size:12.5px;line-height:12.5px;letter-spacing:0.109px;color:#000;">437.20</span>
<span class="t" style="left:831.77px;top:445.02px;font-size:12.5px;line-height:12.5px;letter-spacing:0.189px;color:#000;">263.33</span>
<span class="t" style="left:894.92px;top:445.02px;font-size:12.5px;line-height:12.5px;letter-spacing:0.103px;color:#000;">3458252.00</span>
<span class="t" style="left:991.77px;top:445.02px;font-size:12.5px;line-height:12.5px;letter-spacing:0.120px;color:#000;">2082940.30</span>
<span class="t" style="left:1065.45px;top:445.02px;font-size:12.5px;line-height:12.5px;letter-spacing:0.156px;color:#000;">1375311.70</span>
<span class="t" style="left:8.65px;top:5.02px;font-size:12.5px;line-height:12.5px;color:#217346;">1</span>
<span class="t" style="left:8.82px;top:25.02px;font-size:12.5px;line-height:12.5px;color:#444;">2</span>
<span class="t" style="left:8.86px;top:45.02px;font-size:12.5px;line-height:12.5px;color:#444;">3</span>
<span class="t" style="left:8.86px;top:65.02px;font-size:12.5px;line-height:12.5px;color:#444;">4</span>
<span class="t" style="left:8.84px;top:85.02px;font-size:12.5px;line-height:12.5px;color:#444;">5</span>
<span class="t" style="left:8.78px;top:105.02px;font-size:12.5px;line-height:12.5px;color:#444;">6</span>
<span class="t" style="left:8.82px;top:125.02px;font-size:12.5px;line-height:12.5px;color:#444;">7</span>
<span class="t" style="left:8.82px;top:145.02px;font-size:12.5px;line-height:12.5px;color:#444;">8</span>
<span class="t" style="left:8.83px;top:165.02px;font-size:12.5px;line-height:12.5px;color:#444;">9</span>
<span class="t" style="left:5.05px;top:185.02px;font-size:12.5px;line-height:12.5px;letter-spacing:0.537px;color:#444;">10</span>
<span class="t" style="left:5.05px;top:205.02px;font-size:12.5px;line-height:12.5px;letter-spacing:0.659px;color:#444;">11</span>
<span class="t" style="left:5.05px;top:225.02px;font-size:12.5px;line-height:12.5px;letter-spacing:0.677px;color:#444;">12</span>
<span class="t" style="left:5.05px;top:245.02px;font-size:12.5px;line-height:12.5px;letter-spacing:0.598px;color:#444;">13</span>
<span class="t" style="left:5.05px;top:265.02px;font-size:12.5px;line-height:12.5px;letter-spacing:0.415px;color:#444;">14</span>
<span class="t" style="left:5.05px;top:285.02px;font-size:12.5px;line-height:12.5px;letter-spacing:0.573px;color:#444;">15</span>
<span class="t" style="left:5.05px;top:305.02px;font-size:12.5px;line-height:12.5px;letter-spacing:0.598px;color:#444;">16</span>
<span class="t" style="left:5.05px;top:325.02px;font-size:12.5px;line-height:12.5px;letter-spacing:0.677px;color:#444;">17</span>
<span class="t" style="left:5.05px;top:345.02px;font-size:12.5px;line-height:12.5px;letter-spacing:0.592px;color:#444;">18</span>
<span class="t" style="left:5.05px;top:365.02px;font-size:12.5px;line-height:12.5px;letter-spacing:0.640px;color:#444;">19</span>
<span class="t" style="left:5.37px;top:385.02px;font-size:12.5px;line-height:12.5px;letter-spacing:0.213px;color:#444;">20</span>
<span class="t" style="left:5.37px;top:405.02px;font-size:12.5px;line-height:12.5px;letter-spacing:0.335px;color:#444;">21</span>
<span class="t" style="left:5.37px;top:425.02px;font-size:12.5px;line-height:12.5px;letter-spacing:0.354px;color:#444;">22</span>
<span class="t" style="left:5.37px;top:445.02px;font-size:12.5px;line-height:12.5px;letter-spacing:0.274px;color:#444;">23</span>
</div>
<div class="r" style="left:24px;top:225px;width:54px;height:23px;background:transparent;box-shadow:0 0 0 2px #217346 inset;"></div>
<div class="r" style="left:73px;top:244px;width:6px;height:5px;background:#fff;"></div>
<div class="r" style="left:74px;top:245px;width:5px;height:4px;background:#217346;"></div>
<div class="r" style="left:1345px;top:207px;width:21px;height:472px;background:#e6e6e6;"></div>
<div class="r" style="left:1348px;top:209px;width:15px;height:15px;background:#fff;box-shadow:0 0 0 1px #c6c6c6 inset;"></div>
<div class="r" style="left:1348px;top:224px;width:15px;height:420px;background:#fff;box-shadow:0 0 0 1px #c6c6c6 inset;"></div>
<div class="r" style="left:1348px;top:644px;width:15px;height:20px;background:#d3d3d3;"></div>
<div class="r" style="left:1348px;top:664px;width:15px;height:14px;background:#fff;box-shadow:0 0 0 1px #c6c6c6 inset;"></div>
<div class="ga">
<div class="r" style="left:0px;top:678px;width:1366px;height:28px;background:#e6e6e6;"></div>
<div class="r" style="left:0px;top:678px;width:1345px;height:1px;background:#a6a6a6;"></div>
<div class="r" style="left:100px;top:678px;width:67px;height:23px;background:#fff;border-left:1px solid #c6c6c6;border-right:1px solid #c6c6c6;box-sizing:border-box;"></div>
<div class="r" style="left:100px;top:701px;width:67px;height:2px;background:#217346;"></div>
<span class="t" style="left:111.73px;top:685.00px;font-size:13px;line-height:13px;letter-spacing:-0.174px;color:#217346;font-weight:bold;">Europe</span>
<div class="r" style="left:836px;top:685px;width:509px;height:15px;background:#d3d3d3;"></div>
<div class="r" style="left:836px;top:685px;width:15px;height:15px;background:#fff;box-shadow:0 0 0 1px #c6c6c6 inset;"></div>
<div class="r" style="left:850px;top:685px;width:451px;height:15px;background:#fff;box-shadow:0 0 0 1px #c6c6c6 inset;"></div>
<div class="r" style="left:1330px;top:685px;width:15px;height:15px;background:#fff;box-shadow:0 0 0 1px #c6c6c6 inset;"></div>
<div class="r" style="left:0px;top:706px;width:1366px;height:19px;background:#f3f2f1;"></div>
<div class="r" style="left:0px;top:706px;width:1366px;height:1px;background:#d4d2d0;"></div>
<div class="r" style="left:1062px;top:707px;width:41px;height:18px;background:#c8c6c4;"></div>
<span class="t" style="left:6.36px;top:712.47px;font-size:11.5px;line-height:11.5px;letter-spacing:-0.519px;color:#3c3c3c;">Ready</span>
<span class="t" style="left:107.58px;top:712.47px;font-size:11.5px;line-height:11.5px;letter-spacing:0.012px;color:#3c3c3c;">Accessibility: Good to go</span>
<span class="t" style="left:1328.16px;top:711.69px;font-size:11px;line-height:11px;letter-spacing:-0.265px;color:#3c3c3c;">100 %</span>
<svg class="r" style="left:0px;top:207px;overflow:visible" width="1366" height="518" viewBox="0 207 1366 518"><path d="M1352 218.6H1359L1355.5 214.6Z" fill="#666"/><path d="M1352 669.4H1359L1355.5 673.4Z" fill="#666"/><path d="M845.8 689V696L841.8 692.5Z" fill="#666"/><path d="M1335.6 689V696L1339.6 692.5Z" fill="#666"/><circle cx="819.5" cy="688.4" r=".9" fill="#a0a0a0"/><circle cx="819.5" cy="692" r=".9" fill="#a0a0a0"/><circle cx="819.5" cy="695.6" r=".9" fill="#a0a0a0"/><path d="M31.4 688.4V694.8L26.8 691.6Z" fill="#c2c2c2"/><path d="M55.8 688.4V694.8L60.4 691.6Z" fill="#c2c2c2"/><circle cx="207.7" cy="692" r="7.4" fill="none" stroke="#808080" stroke-width="1.1"/><path d="M203.5 692H211.9M207.7 687.8V696.2" stroke="#707070" stroke-width="1.9"/><path d="M63.4 722.6H58.7V711.9H71.5V715.4" fill="none" stroke="#5a5a5a" stroke-width="1.2"/><path d="M58.7 714.7H71.5" stroke="#5a5a5a" stroke-width="1"/><path d="M60.4 716.7H62.8M60.4 719.4H62.4" stroke="#5a5a5a" stroke-width="1.1"/><circle cx="67.3" cy="719.5" r="3.8" fill="#f3f2f1" stroke="#5a5a5a" stroke-width="1.2"/><circle cx="67.3" cy="719.5" r="1.7" fill="#5a5a5a"/><circle cx="96" cy="712.1" r="1.7" fill="none" stroke="#5a5a5a" stroke-width="1.1"/><path d="M90.6 713.6Q91.4 715.6 94.2 715.6V719.4Q94.4 721.6 92.6 723.4" fill="none" stroke="#5a5a5a" stroke-width="1.2"/><path d="M101.4 713.6Q100.6 715.6 97.8 715.6V718.4" fill="none" stroke="#5a5a5a" stroke-width="1.2"/><path d="M94.2 715.6H97.8" stroke="#5a5a5a" stroke-width="1.2"/><path d="M96.8 720.8L99.5 723.4L104.8 718" fill="none" stroke="#5a5a5a" stroke-width="1.3"/><rect x="1076.5" y="710.5" width="12" height="11" fill="none" stroke="#5a5a5a" stroke-width="1"/><path d="M1080.5 710.5V721.5M1084.5 710.5V721.5M1076.5 714.2H1088.5M1076.5 717.8H1088.5" stroke="#5a5a5a" stroke-width="1"/><rect x="1116.5" y="710.5" width="13" height="11" fill="none" stroke="#5a5a5a" stroke-width="1"/><rect x="1119.5" y="713.5" width="7" height="6" fill="none" stroke="#5a5a5a" stroke-width="1"/><path d="M1121 715.5H1125M1121 717.5H1125" stroke="#5a5a5a" stroke-width=".8"/><rect x="1156.5" y="710.5" width="13" height="11" fill="none" stroke="#5a5a5a" stroke-width="1"/><path d="M1160.5 710.5V716.5H1165.5V710.5" fill="none" stroke="#5a5a5a" stroke-width="1"/><path d="M1189 717.5H1196.6" stroke="#5a5a5a" stroke-width="1"/><path d="M1202 717.5H1301.5" stroke="#9a9a9a" stroke-width="1"/><rect x="1250.2" y="712.4" width="4.8" height="10" fill="#6a6a6a"/><path d="M1307 717.5H1314.6M1310.8 713.7V721.3" stroke="#5a5a5a" stroke-width="1"/></svg>
</div>
</body></html>
